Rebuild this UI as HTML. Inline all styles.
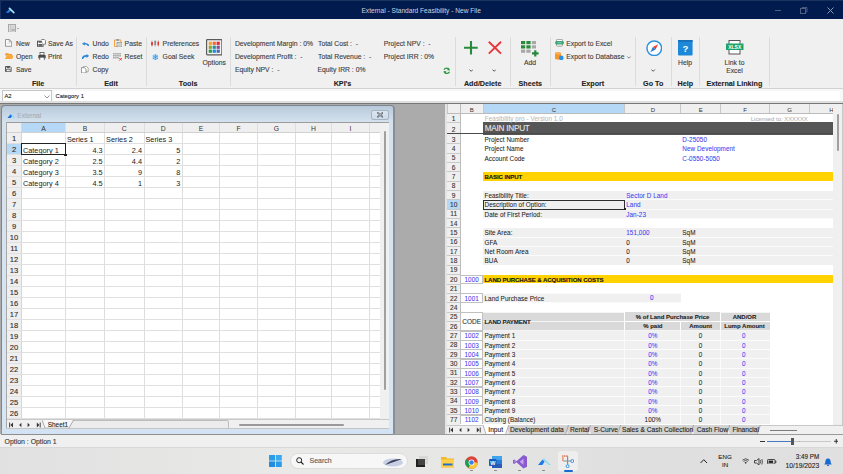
<!DOCTYPE html><html><head><meta charset="utf-8"><style>
html,body{margin:0;padding:0;}
body{width:843px;height:474px;overflow:hidden;position:relative;background:#f0f0f0;font-family:"Liberation Sans",sans-serif;}
div,svg{position:absolute;box-sizing:border-box;}
div{-webkit-text-stroke:0.1px currentColor;}
</style></head><body>
<div style="left:0.00px;top:0.00px;width:843.00px;height:19.40px;background:#011b4f;"></div>
<div style="left:0.00px;top:0.00px;width:843.00px;height:1.00px;background:#1b325f;"></div>
<svg style="left:5.00px;top:6.50px;" width="10" height="7" viewBox="0 0 10 7"><path d="M0.8 5.8 L4.3 2.2 L5.9 3.8 L3.6 5.8 Z" fill="#2a86ec"/><path d="M4.5 1.4 L8.8 5.6" stroke="#a8e4f4" stroke-width="1.7" stroke-linecap="round"/></svg>
<div style="left:0.00px;top:0.00px;width:1.00px;height:19.40px;background:#1a3060;"></div>
<div style="left:271.20px;top:5.80px;width:300px;text-align:center;line-height:10px;font-size:6.6px;color:#cdd4e2;font-weight:normal;white-space:nowrap;-webkit-text-stroke:0;">External - Standard Feasibility - New File</div>
<div style="left:774.80px;top:9.60px;width:6.00px;height:0.90px;background:#4e5f80;"></div>
<svg style="left:800.00px;top:7.00px;" width="8" height="7" viewBox="0 0 8 7"><rect x="0.5" y="1.5" width="5" height="5" stroke="#4e5f80" fill="none" stroke-width="1"/><path d="M2 1.5 V0.5 H7 V5 H6" stroke="#4e5f80" fill="none" stroke-width="0.9"/></svg>
<svg style="left:827.00px;top:7.00px;" width="7" height="7" viewBox="0 0 7 7"><path d="M0.5 0.5 L6.5 6.5 M6.5 0.5 L0.5 6.5" stroke="#8e9ab2" stroke-width="1"/></svg>
<div style="left:0.00px;top:19.40px;width:843.00px;height:68.60px;background:#f0f0f0;"></div>
<svg style="left:8.40px;top:23.60px;" width="11.5" height="8.6" viewBox="0 0 11.5 8.6"><rect x="0.5" y="0.5" width="7" height="7.8" fill="#dcdcdc" stroke="#a4a4a4" stroke-width="0.9"/><path d="M2.6 0.5 V8.3" stroke="#b8b8b8" stroke-width="0.6"/><path d="M3.6 2.4 H6.6 M3.6 4.2 H6.6" stroke="#c4c4c4" stroke-width="0.6"/><path d="M3.4 6 H6.8" stroke="#888" stroke-width="0.9"/><path d="M8.8 4 L9.9 5 L11 4" stroke="#999" fill="none" stroke-width="0.8"/></svg>
<div style="left:76.00px;top:37.00px;width:1.00px;height:49.00px;background:#dcdcdc;"></div>
<div style="left:146.00px;top:37.00px;width:1.00px;height:49.00px;background:#dcdcdc;"></div>
<div style="left:229.50px;top:37.00px;width:1.00px;height:49.00px;background:#dcdcdc;"></div>
<div style="left:455.20px;top:37.00px;width:1.00px;height:49.00px;background:#dcdcdc;"></div>
<div style="left:510.10px;top:37.00px;width:1.00px;height:49.00px;background:#dcdcdc;"></div>
<div style="left:549.90px;top:37.00px;width:1.00px;height:49.00px;background:#dcdcdc;"></div>
<div style="left:635.00px;top:37.00px;width:1.00px;height:49.00px;background:#dcdcdc;"></div>
<div style="left:671.00px;top:37.00px;width:1.00px;height:49.00px;background:#dcdcdc;"></div>
<div style="left:699.00px;top:37.00px;width:1.00px;height:49.00px;background:#dcdcdc;"></div>
<div style="left:769.20px;top:37.00px;width:1.00px;height:49.00px;background:#dcdcdc;"></div>
<div style="left:16.00px;top:38.70px;line-height:10px;font-size:6.8px;color:#3a3a3a;font-weight:normal;white-space:nowrap;">New</div>
<div style="left:16.00px;top:52.00px;line-height:10px;font-size:6.8px;color:#3a3a3a;font-weight:normal;white-space:nowrap;">Open</div>
<div style="left:16.00px;top:65.00px;line-height:10px;font-size:6.8px;color:#3a3a3a;font-weight:normal;white-space:nowrap;">Save</div>
<div style="left:48.00px;top:38.70px;line-height:10px;font-size:6.8px;color:#3a3a3a;font-weight:normal;white-space:nowrap;">Save As</div>
<div style="left:48.00px;top:52.00px;line-height:10px;font-size:6.8px;color:#3a3a3a;font-weight:normal;white-space:nowrap;">Print</div>
<div style="left:8.20px;top:78.50px;width:60px;text-align:center;line-height:10px;font-size:7.2px;color:#222;font-weight:bold;white-space:nowrap;">File</div>
<div style="left:92.60px;top:38.70px;line-height:10px;font-size:6.8px;color:#3a3a3a;font-weight:normal;white-space:nowrap;">Undo</div>
<div style="left:92.60px;top:51.50px;line-height:10px;font-size:6.8px;color:#3a3a3a;font-weight:normal;white-space:nowrap;">Redo</div>
<div style="left:92.60px;top:65.00px;line-height:10px;font-size:6.8px;color:#3a3a3a;font-weight:normal;white-space:nowrap;">Copy</div>
<div style="left:124.60px;top:38.70px;line-height:10px;font-size:6.8px;color:#3a3a3a;font-weight:normal;white-space:nowrap;">Paste</div>
<div style="left:124.60px;top:51.50px;line-height:10px;font-size:6.8px;color:#3a3a3a;font-weight:normal;white-space:nowrap;">Reset</div>
<div style="left:81.00px;top:78.50px;width:60px;text-align:center;line-height:10px;font-size:7.2px;color:#222;font-weight:bold;white-space:nowrap;">Edit</div>
<div style="left:162.60px;top:38.70px;line-height:10px;font-size:6.8px;color:#3a3a3a;font-weight:normal;white-space:nowrap;">Preferences</div>
<div style="left:162.60px;top:52.00px;line-height:10px;font-size:6.8px;color:#3a3a3a;font-weight:normal;white-space:nowrap;">Goal Seek</div>
<div style="left:194.20px;top:58.00px;width:40px;text-align:center;line-height:10px;font-size:6.8px;color:#3a3a3a;font-weight:normal;white-space:nowrap;">Options</div>
<div style="left:158.20px;top:78.50px;width:60px;text-align:center;line-height:10px;font-size:7.2px;color:#222;font-weight:bold;white-space:nowrap;">Tools</div>
<div style="left:234.90px;top:38.70px;line-height:10px;font-size:6.8px;color:#3a3a3a;font-weight:normal;white-space:nowrap;">Development Margin : 0%</div>
<div style="left:234.90px;top:52.00px;line-height:10px;font-size:6.8px;color:#3a3a3a;font-weight:normal;white-space:nowrap;">Development Profit :&nbsp; -</div>
<div style="left:234.90px;top:65.00px;line-height:10px;font-size:6.8px;color:#3a3a3a;font-weight:normal;white-space:nowrap;">Equity NPV :&nbsp; -</div>
<div style="left:318.00px;top:38.70px;line-height:10px;font-size:6.8px;color:#3a3a3a;font-weight:normal;white-space:nowrap;">Total Cost :&nbsp; -</div>
<div style="left:318.00px;top:52.00px;line-height:10px;font-size:6.8px;color:#3a3a3a;font-weight:normal;white-space:nowrap;">Total Revenue :&nbsp; -</div>
<div style="left:317.50px;top:65.00px;line-height:10px;font-size:6.8px;color:#3a3a3a;font-weight:normal;white-space:nowrap;">Equity IRR : 0%</div>
<div style="left:383.80px;top:38.70px;line-height:10px;font-size:6.8px;color:#3a3a3a;font-weight:normal;white-space:nowrap;">Project NPV :&nbsp; -</div>
<div style="left:383.80px;top:52.00px;line-height:10px;font-size:6.8px;color:#3a3a3a;font-weight:normal;white-space:nowrap;">Project IRR : 0%</div>
<div style="left:312.50px;top:78.50px;width:60px;text-align:center;line-height:10px;font-size:7.2px;color:#222;font-weight:bold;white-space:nowrap;">KPI's</div>
<div style="left:442.70px;top:78.50px;width:80px;text-align:center;line-height:10px;font-size:7.2px;color:#222;font-weight:bold;white-space:nowrap;">Add/Delete</div>
<div style="left:500.30px;top:78.50px;width:60px;text-align:center;line-height:10px;font-size:7.2px;color:#222;font-weight:bold;white-space:nowrap;">Sheets</div>
<div style="left:510.00px;top:58.00px;width:40px;text-align:center;line-height:10px;font-size:6.8px;color:#3a3a3a;font-weight:normal;white-space:nowrap;">Add</div>
<div style="left:566.30px;top:38.70px;line-height:10px;font-size:6.8px;color:#3a3a3a;font-weight:normal;white-space:nowrap;">Export to Excel</div>
<div style="left:566.30px;top:52.00px;line-height:10px;font-size:6.8px;color:#3a3a3a;font-weight:normal;white-space:nowrap;">Export to Database</div>
<div style="left:562.90px;top:78.50px;width:60px;text-align:center;line-height:10px;font-size:7.2px;color:#222;font-weight:bold;white-space:nowrap;">Export</div>
<div style="left:623.20px;top:78.50px;width:60px;text-align:center;line-height:10px;font-size:7.2px;color:#222;font-weight:bold;white-space:nowrap;">Go To</div>
<div style="left:665.00px;top:58.00px;width:40px;text-align:center;line-height:10px;font-size:6.8px;color:#3a3a3a;font-weight:normal;white-space:nowrap;">Help</div>
<div style="left:655.30px;top:78.50px;width:60px;text-align:center;line-height:10px;font-size:7.2px;color:#222;font-weight:bold;white-space:nowrap;">Help</div>
<div style="left:714.50px;top:58.00px;width:40px;text-align:center;line-height:10px;font-size:6.8px;color:#3a3a3a;font-weight:normal;white-space:nowrap;">Link to</div>
<div style="left:714.50px;top:65.60px;width:40px;text-align:center;line-height:10px;font-size:6.8px;color:#3a3a3a;font-weight:normal;white-space:nowrap;">Excel</div>
<div style="left:684.40px;top:78.50px;width:100px;text-align:center;line-height:10px;font-size:7.2px;color:#222;font-weight:bold;white-space:nowrap;">External Linking</div>
<svg style="left:5.00px;top:39.40px;" width="7.2" height="7.8" viewBox="0 0 7.2 7.8"><path d="M0.5 0.5 H4.3 L6.7 2.9 V7.3 H0.5 Z" fill="#fafafa" stroke="#8c8c8c" stroke-width="0.9"/><path d="M4.3 0.5 V2.9 H6.7" fill="none" stroke="#8c8c8c" stroke-width="0.7"/><path d="M2 4.3 H5" stroke="#c8c8c8" stroke-width="0.6"/></svg>
<svg style="left:4.60px;top:53.10px;" width="8.8" height="6.2" viewBox="0 0 8.8 6.2"><path d="M0.3 0.3 H3.2 L4 1.1 H7 V2.4 H0.3 Z" fill="#f39a2a"/><path d="M0.3 2.2 V5.9 H7 L8.6 2.6 H2 L0.3 5.2" fill="#f7a035"/><path d="M1.8 2.6 H8.6 L7 5.9 H0.3 Z" fill="#fba93d"/></svg>
<svg style="left:5.40px;top:66.20px;" width="6.6" height="6.2" viewBox="0 0 6.6 6.2"><path d="M0.5 0.5 H5.2 L6.1 1.4 V5.7 H0.5 Z" fill="#fff" stroke="#575757" stroke-width="1"/><rect x="1.6" y="0.5" width="3.2" height="1.9" fill="#575757"/><rect x="1.5" y="3.5" width="3.6" height="2.2" fill="#e8e8e8" stroke="#575757" stroke-width="0.6"/></svg>
<svg style="left:37.20px;top:38.80px;" width="9" height="7.8" viewBox="0 0 9 7.8"><rect x="0.5" y="2.2" width="5.6" height="5.1" fill="#fff" stroke="#555" stroke-width="1"/><rect x="1.6" y="2.2" width="3.2" height="1.6" fill="#555"/><rect x="1.4" y="5" width="3.8" height="1.8" fill="#555"/><path d="M4.3 0.5 H7.3 L8.5 1.7 V5.2 H6.3" fill="#fff" stroke="#666" stroke-width="0.8"/></svg>
<svg style="left:37.60px;top:51.60px;" width="8" height="8.8" viewBox="0 0 8 8.8"><rect x="2" y="0.4" width="4" height="2.6" fill="#fff" stroke="#555" stroke-width="0.8"/><rect x="0.3" y="3" width="7.4" height="3.6" rx="0.8" fill="#4a4a4a"/><rect x="1.8" y="5.2" width="4.4" height="3.2" fill="#fff" stroke="#555" stroke-width="0.8"/></svg>
<svg style="left:82.20px;top:41.60px;" width="7.2" height="4.8" viewBox="0 0 7.2 4.8"><path d="M0 1.8 L2.8 0 V3.6 Z" fill="#2a86d6"/><path d="M2.4 1.8 C4.8 1.6 6.4 2.3 6.9 4.6" stroke="#2a86d6" stroke-width="1.7" fill="none"/></svg>
<svg style="left:82.00px;top:53.50px;" width="7.2" height="5.2" viewBox="0 0 7.2 5.2"><path d="M7.2 2 L4.4 0.1 V3.9 Z" fill="#2a86d6"/><path d="M4.8 2 C2.4 1.8 0.8 2.8 0.3 5" stroke="#2a86d6" stroke-width="1.7" fill="none"/></svg>
<svg style="left:81.30px;top:65.80px;" width="7.6" height="7.4" viewBox="0 0 7.6 7.4"><path d="M2.6 0.4 H5.4 L7.2 2.2 V5.8 H2.6 Z" fill="#fff" stroke="#8a8a8a" stroke-width="0.7"/><path d="M0.4 1.6 H3.4 L5 3.2 V7 H0.4 Z" fill="#fff" stroke="#7a7a7a" stroke-width="0.8"/></svg>
<svg style="left:114.00px;top:38.80px;" width="8.4" height="8.2" viewBox="0 0 8.4 8.2"><path d="M2 1 H0.5 V7.6 H3" fill="none" stroke="#f39a2a" stroke-width="0.9"/><path d="M5.5 1 H6.8 V3" fill="none" stroke="#f39a2a" stroke-width="0.9"/><rect x="2.2" y="0.2" width="3" height="1.6" fill="#8a8a8a"/><rect x="3" y="3.4" width="5" height="4.6" fill="#e0e0e0" stroke="#8a8a8a" stroke-width="0.7"/><path d="M4 5 H7 M4 6.4 H7" stroke="#aaa" stroke-width="0.5"/></svg>
<svg style="left:113.00px;top:53.20px;" width="9.2" height="7.8" viewBox="0 0 9.2 7.8"><g fill="#a4a4a4"><rect x="0" y="0" width="1.6" height="1.5"/><rect x="2.1" y="0" width="1.6" height="1.5"/><rect x="4.2" y="0" width="1.6" height="1.5"/><rect x="6.3" y="0" width="1.6" height="1.5"/><rect x="0" y="2" width="1.6" height="1.5"/><rect x="2.1" y="2" width="1.6" height="1.5"/><rect x="4.2" y="2" width="1.6" height="1.5"/><rect x="6.3" y="2" width="1.6" height="1.5"/><rect x="0" y="4" width="1.6" height="1.5"/><rect x="2.1" y="4" width="1.6" height="1.5"/><rect x="4.2" y="4" width="1.6" height="1.5"/></g><path d="M6.3 5 L8.8 7.5 M8.8 5 L6.3 7.5" stroke="#e83030" stroke-width="1"/></svg>
<svg style="left:150.80px;top:40.20px;" width="8.4" height="6.8" viewBox="0 0 8.4 6.8"><path d="M1 0 V6.8 M4.2 0 V6.8 M7.4 0 V6.8" stroke="#b8b8b8" stroke-width="0.7"/><rect x="0.1" y="1.8" width="1.8" height="3.6" rx="0.5" fill="#e5322d"/><rect x="3.3" y="0.8" width="1.8" height="4.4" rx="0.5" fill="#8a8a8a"/><rect x="6.5" y="1.4" width="1.8" height="4" rx="0.5" fill="#e5322d"/></svg>
<svg style="left:151.80px;top:53.50px;" width="6.8" height="6.4" viewBox="0 0 6.8 6.4"><circle cx="3.4" cy="3.2" r="2.9" fill="#9fd0f2"/><circle cx="3.4" cy="3.2" r="1.2" fill="#fff"/><path d="M3.4 0.2 V6.2 M0.8 1.7 L6 4.7 M0.8 4.7 L6 1.7" stroke="#3a98de" stroke-width="0.8"/></svg>
<svg style="left:205.50px;top:39.00px;" width="16.5" height="16.5" viewBox="0 0 16.5 16.5"><rect x="0.6" y="0.6" width="15.3" height="15.3" fill="#f4f4f4" stroke="#5a5a5a" stroke-width="1.2" rx="0.8"/><rect x="2.7" y="2.7" width="3.2" height="3.2" fill="#f5a030"/><rect x="6.65" y="2.7" width="3.2" height="3.2" fill="#f06a2a"/><rect x="10.6" y="2.7" width="3.2" height="3.2" fill="#e8283a"/><rect x="2.7" y="6.65" width="3.2" height="3.2" fill="#9aa030"/><rect x="6.65" y="6.65" width="3.2" height="3.2" fill="#1a9a8a"/><rect x="10.6" y="6.65" width="3.2" height="3.2" fill="#8a4aa0"/><rect x="2.7" y="10.6" width="3.2" height="3.2" fill="#2a9a3a"/><rect x="6.65" y="10.6" width="3.2" height="3.2" fill="#1a88e0"/><rect x="10.6" y="10.6" width="3.2" height="3.2" fill="#4a6ab0"/></svg>
<svg style="left:442.50px;top:66.50px;" width="7.5" height="7.5" viewBox="0 0 7.5 7.5"><path d="M6.3 2.6 A3 3 0 0 0 1 2.8" stroke="#2e9a3e" stroke-width="1.3" fill="none"/><path d="M1.2 4.9 A3 3 0 0 0 6.5 4.7" stroke="#2e9a3e" stroke-width="1.3" fill="none"/><path d="M5 0.6 L7.2 3.4 L4.2 3.2 Z" fill="#2e9a3e"/><path d="M2.5 6.9 L0.3 4.1 L3.3 4.3 Z" fill="#2e9a3e"/></svg>
<svg style="left:464.40px;top:41.00px;" width="14" height="14" viewBox="0 0 14 14"><path d="M7 0 V13.5 M0 6.8 H13.7" stroke="#2a8a3c" stroke-width="2.1"/></svg>
<svg style="left:487.70px;top:41.20px;" width="14" height="13.5" viewBox="0 0 14 13.5"><path d="M0.8 0.8 L13 12.6 M13 0.8 L0.8 12.6" stroke="#e8363a" stroke-width="1.9"/></svg>
<svg style="left:469.10px;top:68.60px;" width="4.4" height="3" viewBox="0 0 4.4 3"><path d="M0.5 0.6 L2.2 2.3 L3.9 0.6" stroke="#555" stroke-width="1" fill="none"/></svg>
<svg style="left:492.00px;top:68.60px;" width="4.4" height="3" viewBox="0 0 4.4 3"><path d="M0.5 0.6 L2.2 2.3 L3.9 0.6" stroke="#555" stroke-width="1" fill="none"/></svg>
<svg style="left:651.30px;top:68.60px;" width="4.4" height="3" viewBox="0 0 4.4 3"><path d="M0.5 0.6 L2.2 2.3 L3.9 0.6" stroke="#555" stroke-width="1" fill="none"/></svg>
<svg style="left:521.20px;top:40.90px;" width="18.5" height="16" viewBox="0 0 18.5 16"><g fill="#2a8a3c"><rect x="0" y="0" width="4.2" height="3.2"/><rect x="5.4" y="0" width="4.2" height="3.2"/><rect x="0" y="4.3" width="4.2" height="3.2"/><rect x="5.4" y="4.3" width="4.2" height="3.2"/></g><g fill="#a8a8a8"><rect x="10.8" y="0" width="4.2" height="3.2"/><rect x="10.8" y="4.3" width="4.2" height="3.2"/><rect x="0" y="8.6" width="4.2" height="3.2"/><rect x="5.4" y="8.6" width="4.2" height="3.2"/></g><path d="M14.3 9.2 V15.6 M11 12.4 H17.6" stroke="#2a8a3c" stroke-width="2.2"/></svg>
<svg style="left:555.10px;top:39.30px;" width="9" height="7.5" viewBox="0 0 9 7.5"><rect x="1.5" y="0.4" width="6" height="6.7" rx="0.8" fill="#fff" stroke="#8a8a8a" stroke-width="0.8"/><rect x="0" y="2" width="9" height="3.4" rx="1.7" fill="#3ba57a"/><path d="M2.5 3.7 H6.5" stroke="#bfe6d2" stroke-width="0.6"/></svg>
<svg style="left:555.00px;top:52.00px;" width="8.6" height="8.2" viewBox="0 0 8.6 8.2"><path d="M0 1.2 C0 -0.2 6 -0.2 6 1.2 V6.6 C6 8 0 8 0 6.6 Z" fill="#f7962a"/><ellipse cx="3" cy="1.3" rx="3" ry="1.1" fill="#fbb060"/><circle cx="6.3" cy="5.9" r="2.3" fill="#2a90e0"/></svg>
<svg style="left:627.00px;top:55.50px;" width="4" height="3" viewBox="0 0 4 3"><path d="M0.3 0.5 L2 2.2 L3.7 0.5" stroke="#666" stroke-width="0.8" fill="none"/></svg>
<svg style="left:645.70px;top:39.50px;" width="16.5" height="16.5" viewBox="0 0 16.5 16.5"><circle cx="8.25" cy="8.25" r="7.3" fill="#fff" stroke="#2a92de" stroke-width="1.5"/><path d="M12.2 4.3 L6.9 6.9 L9.6 9.6 Z" fill="#e8403a"/><path d="M4.3 12.2 L6.9 6.9 L9.6 9.6 Z" fill="#2a7ad0"/></svg>
<svg style="left:677.70px;top:39.70px;" width="15" height="16" viewBox="0 0 15 16"><rect x="0" y="0" width="14.6" height="15.6" rx="1" fill="#1e88d8"/><rect x="0" y="0" width="14.6" height="1.8" fill="#1670b8"/><text x="7.3" y="11.8" font-size="9.5" font-family="Liberation Sans" font-weight="bold" fill="#fff" text-anchor="middle">?</text></svg>
<svg style="left:726.00px;top:39.60px;" width="17.5" height="15" viewBox="0 0 17.5 15"><rect x="3" y="0.5" width="11" height="13.5" fill="#fff" stroke="#555" stroke-width="1"/><rect x="0" y="3.5" width="17.5" height="6.5" fill="#21a366"/><text x="8.75" y="8.9" font-size="5" font-family="Liberation Sans" font-weight="bold" fill="#fff" text-anchor="middle">XLSX</text></svg>
<div style="left:0.00px;top:87.80px;width:843.00px;height:1.40px;background:#d2d2d2;"></div>
<div style="left:0.00px;top:88.80px;width:843.00px;height:14.50px;background:#f8f8f8;"></div>
<div style="left:2.20px;top:90.20px;width:49.50px;height:11.50px;background:#fff;border:1px solid #c6c6c6;"></div>
<div style="left:4.50px;top:91.00px;line-height:10px;font-size:5.8px;color:#222;font-weight:normal;white-space:nowrap;">A2</div>
<svg style="left:44.00px;top:94.50px;" width="6" height="4" viewBox="0 0 6 4"><path d="M0.5 0.5 L3 3 L5.5 0.5" stroke="#777" fill="none" stroke-width="0.8"/></svg>
<div style="left:53.80px;top:91.30px;width:786.60px;height:9.60px;background:#fff;"></div>
<div style="left:55.50px;top:91.00px;line-height:10px;font-size:5.8px;color:#222;font-weight:normal;white-space:nowrap;">Category 1</div>
<div style="left:0.00px;top:100.90px;width:843.00px;height:2.40px;background:#dedede;"></div>
<div style="left:0.00px;top:103.30px;width:843.00px;height:331.00px;background:#ababab;border-top:1.4px solid #777;"></div>
<div style="left:0.80px;top:104.50px;width:394.20px;height:330.10px;background:linear-gradient(180deg,#b8c9da 0px,#d4e2ee 16px,#d8e5f3 100%);border:1px solid #7c8690;border-right:2px solid #8a8e94;border-radius:4px 4px 0 0;"></div>
<svg style="left:6.80px;top:112.50px;" width="8.5" height="5.5" viewBox="0 0 8.5 5.5"><path d="M0 5.5 L3.6 1.2 L5.2 2.8 L3.4 5.5 Z" fill="#1f6fe0"/><path d="M3.6 1.2 L4.4 0.4 L8.5 5.5 H6.8 Z" fill="#8ad8f2"/></svg>
<div style="left:17.30px;top:110.80px;line-height:10px;font-size:6.5px;color:#a4adb8;font-weight:normal;white-space:nowrap;">External</div>
<div style="left:371.00px;top:110.10px;width:17.50px;height:9.70px;background:linear-gradient(#dce6f0,#cddbe8);border:1px solid #a6b4c2;border-radius:2px;"></div>
<svg style="left:376.60px;top:112.20px;" width="6.4" height="5.6" viewBox="0 0 6.4 5.6"><path d="M0.9 0.9 L5.5 4.7 M5.5 0.9 L0.9 4.7" stroke="#6a727c" stroke-width="1.8" stroke-linecap="round"/><path d="M1.2 1.1 L5.2 4.5 M5.2 1.1 L1.2 4.5" stroke="#d8dde2" stroke-width="0.5"/></svg>
<div style="left:5.50px;top:122.00px;width:383.50px;height:306.50px;background:#f0f0f0;border-left:1px solid #a8a8a8;border-top:1px solid #9c9c9c;"></div>
<div style="left:21.50px;top:132.50px;width:358.70px;height:286.00px;background:#fff;"></div>
<div style="left:6.50px;top:122.50px;width:373.70px;height:10.00px;background:#efefef;"></div>
<div style="left:21.50px;top:122.50px;width:43.90px;height:10.00px;background:#b4d8f6;"></div>
<div style="left:23.45px;top:123.90px;width:40px;text-align:center;line-height:10px;font-size:6.8px;color:#333;font-weight:normal;white-space:nowrap;-webkit-text-stroke:0;">A</div>
<div style="left:65.00px;top:123.90px;width:40px;text-align:center;line-height:10px;font-size:6.8px;color:#333;font-weight:normal;white-space:nowrap;-webkit-text-stroke:0;">B</div>
<div style="left:104.30px;top:123.90px;width:40px;text-align:center;line-height:10px;font-size:6.8px;color:#333;font-weight:normal;white-space:nowrap;-webkit-text-stroke:0;">C</div>
<div style="left:143.20px;top:123.90px;width:40px;text-align:center;line-height:10px;font-size:6.8px;color:#333;font-weight:normal;white-space:nowrap;-webkit-text-stroke:0;">D</div>
<div style="left:181.05px;top:123.90px;width:40px;text-align:center;line-height:10px;font-size:6.8px;color:#333;font-weight:normal;white-space:nowrap;-webkit-text-stroke:0;">E</div>
<div style="left:218.65px;top:123.90px;width:40px;text-align:center;line-height:10px;font-size:6.8px;color:#333;font-weight:normal;white-space:nowrap;-webkit-text-stroke:0;">F</div>
<div style="left:256.30px;top:123.90px;width:40px;text-align:center;line-height:10px;font-size:6.8px;color:#333;font-weight:normal;white-space:nowrap;-webkit-text-stroke:0;">G</div>
<div style="left:293.40px;top:123.90px;width:40px;text-align:center;line-height:10px;font-size:6.8px;color:#333;font-weight:normal;white-space:nowrap;-webkit-text-stroke:0;">H</div>
<div style="left:330.50px;top:123.90px;width:40px;text-align:center;line-height:10px;font-size:6.8px;color:#333;font-weight:normal;white-space:nowrap;-webkit-text-stroke:0;">I</div>
<div style="left:6.50px;top:132.50px;width:15.00px;height:286.00px;background:#efefef;"></div>
<div style="left:6.50px;top:143.50px;width:15.00px;height:11.00px;background:#b4d8f6;"></div>
<div style="left:64.90px;top:122.50px;width:1.00px;height:296.00px;background:#dedede;"></div>
<div style="left:104.10px;top:122.50px;width:1.00px;height:296.00px;background:#dedede;"></div>
<div style="left:143.50px;top:122.50px;width:1.00px;height:296.00px;background:#dedede;"></div>
<div style="left:181.90px;top:122.50px;width:1.00px;height:296.00px;background:#dedede;"></div>
<div style="left:219.20px;top:122.50px;width:1.00px;height:296.00px;background:#dedede;"></div>
<div style="left:257.10px;top:122.50px;width:1.00px;height:296.00px;background:#dedede;"></div>
<div style="left:294.50px;top:122.50px;width:1.00px;height:296.00px;background:#dedede;"></div>
<div style="left:331.30px;top:122.50px;width:1.00px;height:296.00px;background:#dedede;"></div>
<div style="left:368.70px;top:122.50px;width:1.00px;height:296.00px;background:#dedede;"></div>
<div style="left:379.70px;top:122.50px;width:1.00px;height:296.00px;background:#dedede;"></div>
<div style="left:21.00px;top:122.50px;width:1.00px;height:296.00px;background:#d6d6d6;"></div>
<div style="left:6.50px;top:132.00px;width:373.70px;height:1.00px;background:#e0e0e0;"></div>
<div style="left:6.50px;top:143.00px;width:373.70px;height:1.00px;background:#e0e0e0;"></div>
<div style="left:6.50px;top:154.00px;width:373.70px;height:1.00px;background:#e0e0e0;"></div>
<div style="left:6.50px;top:165.00px;width:373.70px;height:1.00px;background:#e0e0e0;"></div>
<div style="left:6.50px;top:176.00px;width:373.70px;height:1.00px;background:#e0e0e0;"></div>
<div style="left:6.50px;top:187.00px;width:373.70px;height:1.00px;background:#e0e0e0;"></div>
<div style="left:6.50px;top:198.00px;width:373.70px;height:1.00px;background:#e0e0e0;"></div>
<div style="left:6.50px;top:209.00px;width:373.70px;height:1.00px;background:#e0e0e0;"></div>
<div style="left:6.50px;top:220.00px;width:373.70px;height:1.00px;background:#e0e0e0;"></div>
<div style="left:6.50px;top:231.00px;width:373.70px;height:1.00px;background:#e0e0e0;"></div>
<div style="left:6.50px;top:242.00px;width:373.70px;height:1.00px;background:#e0e0e0;"></div>
<div style="left:6.50px;top:253.00px;width:373.70px;height:1.00px;background:#e0e0e0;"></div>
<div style="left:6.50px;top:264.00px;width:373.70px;height:1.00px;background:#e0e0e0;"></div>
<div style="left:6.50px;top:275.00px;width:373.70px;height:1.00px;background:#e0e0e0;"></div>
<div style="left:6.50px;top:286.00px;width:373.70px;height:1.00px;background:#e0e0e0;"></div>
<div style="left:6.50px;top:297.00px;width:373.70px;height:1.00px;background:#e0e0e0;"></div>
<div style="left:6.50px;top:308.00px;width:373.70px;height:1.00px;background:#e0e0e0;"></div>
<div style="left:6.50px;top:319.00px;width:373.70px;height:1.00px;background:#e0e0e0;"></div>
<div style="left:6.50px;top:330.00px;width:373.70px;height:1.00px;background:#e0e0e0;"></div>
<div style="left:6.50px;top:341.00px;width:373.70px;height:1.00px;background:#e0e0e0;"></div>
<div style="left:6.50px;top:352.00px;width:373.70px;height:1.00px;background:#e0e0e0;"></div>
<div style="left:6.50px;top:363.00px;width:373.70px;height:1.00px;background:#e0e0e0;"></div>
<div style="left:6.50px;top:374.00px;width:373.70px;height:1.00px;background:#e0e0e0;"></div>
<div style="left:6.50px;top:385.00px;width:373.70px;height:1.00px;background:#e0e0e0;"></div>
<div style="left:6.50px;top:396.00px;width:373.70px;height:1.00px;background:#e0e0e0;"></div>
<div style="left:6.50px;top:407.00px;width:373.70px;height:1.00px;background:#e0e0e0;"></div>
<div style="left:6.50px;top:418.00px;width:373.70px;height:1.00px;background:#e0e0e0;"></div>
<div style="left:6.50px;top:131.80px;width:373.70px;height:1.50px;background:#d2d2d2;"></div>
<div style="left:4.10px;top:134.10px;width:20px;text-align:center;line-height:10px;font-size:7.6px;color:#2a2a2a;font-weight:normal;white-space:nowrap;">1</div>
<div style="left:4.10px;top:145.10px;width:20px;text-align:center;line-height:10px;font-size:7.6px;color:#2a2a2a;font-weight:normal;white-space:nowrap;">2</div>
<div style="left:4.10px;top:156.10px;width:20px;text-align:center;line-height:10px;font-size:7.6px;color:#2a2a2a;font-weight:normal;white-space:nowrap;">3</div>
<div style="left:4.10px;top:167.10px;width:20px;text-align:center;line-height:10px;font-size:7.6px;color:#2a2a2a;font-weight:normal;white-space:nowrap;">4</div>
<div style="left:4.10px;top:178.10px;width:20px;text-align:center;line-height:10px;font-size:7.6px;color:#2a2a2a;font-weight:normal;white-space:nowrap;">5</div>
<div style="left:4.10px;top:189.10px;width:20px;text-align:center;line-height:10px;font-size:7.6px;color:#2a2a2a;font-weight:normal;white-space:nowrap;">6</div>
<div style="left:4.10px;top:200.10px;width:20px;text-align:center;line-height:10px;font-size:7.6px;color:#2a2a2a;font-weight:normal;white-space:nowrap;">7</div>
<div style="left:4.10px;top:211.10px;width:20px;text-align:center;line-height:10px;font-size:7.6px;color:#2a2a2a;font-weight:normal;white-space:nowrap;">8</div>
<div style="left:4.10px;top:222.10px;width:20px;text-align:center;line-height:10px;font-size:7.6px;color:#2a2a2a;font-weight:normal;white-space:nowrap;">9</div>
<div style="left:4.10px;top:233.10px;width:20px;text-align:center;line-height:10px;font-size:7.6px;color:#2a2a2a;font-weight:normal;white-space:nowrap;">10</div>
<div style="left:4.10px;top:244.10px;width:20px;text-align:center;line-height:10px;font-size:7.6px;color:#2a2a2a;font-weight:normal;white-space:nowrap;">11</div>
<div style="left:4.10px;top:255.10px;width:20px;text-align:center;line-height:10px;font-size:7.6px;color:#2a2a2a;font-weight:normal;white-space:nowrap;">12</div>
<div style="left:4.10px;top:266.10px;width:20px;text-align:center;line-height:10px;font-size:7.6px;color:#2a2a2a;font-weight:normal;white-space:nowrap;">13</div>
<div style="left:4.10px;top:277.10px;width:20px;text-align:center;line-height:10px;font-size:7.6px;color:#2a2a2a;font-weight:normal;white-space:nowrap;">14</div>
<div style="left:4.10px;top:288.10px;width:20px;text-align:center;line-height:10px;font-size:7.6px;color:#2a2a2a;font-weight:normal;white-space:nowrap;">15</div>
<div style="left:4.10px;top:299.10px;width:20px;text-align:center;line-height:10px;font-size:7.6px;color:#2a2a2a;font-weight:normal;white-space:nowrap;">16</div>
<div style="left:4.10px;top:310.10px;width:20px;text-align:center;line-height:10px;font-size:7.6px;color:#2a2a2a;font-weight:normal;white-space:nowrap;">17</div>
<div style="left:4.10px;top:321.10px;width:20px;text-align:center;line-height:10px;font-size:7.6px;color:#2a2a2a;font-weight:normal;white-space:nowrap;">18</div>
<div style="left:4.10px;top:332.10px;width:20px;text-align:center;line-height:10px;font-size:7.6px;color:#2a2a2a;font-weight:normal;white-space:nowrap;">19</div>
<div style="left:4.10px;top:343.10px;width:20px;text-align:center;line-height:10px;font-size:7.6px;color:#2a2a2a;font-weight:normal;white-space:nowrap;">20</div>
<div style="left:4.10px;top:354.10px;width:20px;text-align:center;line-height:10px;font-size:7.6px;color:#2a2a2a;font-weight:normal;white-space:nowrap;">21</div>
<div style="left:4.10px;top:365.10px;width:20px;text-align:center;line-height:10px;font-size:7.6px;color:#2a2a2a;font-weight:normal;white-space:nowrap;">22</div>
<div style="left:4.10px;top:376.10px;width:20px;text-align:center;line-height:10px;font-size:7.6px;color:#2a2a2a;font-weight:normal;white-space:nowrap;">23</div>
<div style="left:4.10px;top:387.10px;width:20px;text-align:center;line-height:10px;font-size:7.6px;color:#2a2a2a;font-weight:normal;white-space:nowrap;">24</div>
<div style="left:4.10px;top:398.10px;width:20px;text-align:center;line-height:10px;font-size:7.6px;color:#2a2a2a;font-weight:normal;white-space:nowrap;">25</div>
<div style="left:4.10px;top:409.10px;width:20px;text-align:center;line-height:10px;font-size:7.6px;color:#2a2a2a;font-weight:normal;white-space:nowrap;">26</div>
<div style="left:66.90px;top:134.70px;line-height:10px;font-size:7.3px;color:#222;font-weight:normal;white-space:nowrap;-webkit-text-stroke:0;">Series 1</div>
<div style="left:106.10px;top:134.70px;line-height:10px;font-size:7.3px;color:#222;font-weight:normal;white-space:nowrap;-webkit-text-stroke:0;">Series 2</div>
<div style="left:145.50px;top:134.70px;line-height:10px;font-size:7.3px;color:#222;font-weight:normal;white-space:nowrap;-webkit-text-stroke:0;">Series 3</div>
<div style="left:23.00px;top:145.70px;line-height:10px;font-size:7.3px;color:#222;font-weight:normal;white-space:nowrap;-webkit-text-stroke:0;">Category 1</div>
<div style="left:62.60px;top:145.70px;width:40px;text-align:right;line-height:10px;font-size:7.3px;color:#222;font-weight:normal;white-space:nowrap;-webkit-text-stroke:0;">4.3</div>
<div style="left:102.00px;top:145.70px;width:40px;text-align:right;line-height:10px;font-size:7.3px;color:#222;font-weight:normal;white-space:nowrap;-webkit-text-stroke:0;">2.4</div>
<div style="left:140.40px;top:145.70px;width:40px;text-align:right;line-height:10px;font-size:7.3px;color:#222;font-weight:normal;white-space:nowrap;-webkit-text-stroke:0;">5</div>
<div style="left:23.00px;top:156.70px;line-height:10px;font-size:7.3px;color:#222;font-weight:normal;white-space:nowrap;-webkit-text-stroke:0;">Category 2</div>
<div style="left:62.60px;top:156.70px;width:40px;text-align:right;line-height:10px;font-size:7.3px;color:#222;font-weight:normal;white-space:nowrap;-webkit-text-stroke:0;">2.5</div>
<div style="left:102.00px;top:156.70px;width:40px;text-align:right;line-height:10px;font-size:7.3px;color:#222;font-weight:normal;white-space:nowrap;-webkit-text-stroke:0;">4.4</div>
<div style="left:140.40px;top:156.70px;width:40px;text-align:right;line-height:10px;font-size:7.3px;color:#222;font-weight:normal;white-space:nowrap;-webkit-text-stroke:0;">2</div>
<div style="left:23.00px;top:167.70px;line-height:10px;font-size:7.3px;color:#222;font-weight:normal;white-space:nowrap;-webkit-text-stroke:0;">Category 3</div>
<div style="left:62.60px;top:167.70px;width:40px;text-align:right;line-height:10px;font-size:7.3px;color:#222;font-weight:normal;white-space:nowrap;-webkit-text-stroke:0;">3.5</div>
<div style="left:102.00px;top:167.70px;width:40px;text-align:right;line-height:10px;font-size:7.3px;color:#222;font-weight:normal;white-space:nowrap;-webkit-text-stroke:0;">9</div>
<div style="left:140.40px;top:167.70px;width:40px;text-align:right;line-height:10px;font-size:7.3px;color:#222;font-weight:normal;white-space:nowrap;-webkit-text-stroke:0;">8</div>
<div style="left:23.00px;top:178.70px;line-height:10px;font-size:7.3px;color:#222;font-weight:normal;white-space:nowrap;-webkit-text-stroke:0;">Category 4</div>
<div style="left:62.60px;top:178.70px;width:40px;text-align:right;line-height:10px;font-size:7.3px;color:#222;font-weight:normal;white-space:nowrap;-webkit-text-stroke:0;">4.5</div>
<div style="left:102.00px;top:178.70px;width:40px;text-align:right;line-height:10px;font-size:7.3px;color:#222;font-weight:normal;white-space:nowrap;-webkit-text-stroke:0;">1</div>
<div style="left:140.40px;top:178.70px;width:40px;text-align:right;line-height:10px;font-size:7.3px;color:#222;font-weight:normal;white-space:nowrap;-webkit-text-stroke:0;">3</div>
<div style="left:21.30px;top:143.00px;width:44.60px;height:12.00px;border:1.6px solid #222;"></div>
<div style="left:64.40px;top:153.50px;width:2.20px;height:2.20px;background:#222;"></div>
<div style="left:380.20px;top:122.50px;width:8.80px;height:296.00px;background:#f0f0f0;"></div>
<div style="left:383.80px;top:131.00px;width:2.00px;height:258.50px;background:#a0a0a0;border-radius:1px;"></div>
<div style="left:6.50px;top:418.50px;width:382.50px;height:10.00px;background:#f0f0f0;border-top:1px solid #c8c8c8;"></div>
<svg style="left:8.50px;top:421.70px;" width="34" height="6" viewBox="0 0 34 6"><path d="M0.6 0.5 V5.5" stroke="#333" stroke-width="0.9"/><path d="M4 0.6 L1.4 3 L4 5.4 Z" fill="#333"/><path d="M12.4 0.8 L10.2 3 L12.4 5.2 Z" fill="#333"/><path d="M18.6 0.8 L20.8 3 L18.6 5.2 Z" fill="#333"/><path d="M27.8 0.6 L30.4 3 L27.8 5.4 Z" fill="#333"/><path d="M31.2 0.5 V5.5" stroke="#333" stroke-width="0.9"/></svg>
<div style="left:44.00px;top:420.30px;width:185.00px;height:8.40px;background:#ececec;border:1px solid #bdbdbd;border-left:none;border-radius:0 2px 2px 0;"></div>
<svg style="left:41.60px;top:420.30px;" width="32" height="8.4" viewBox="0 0 32 8.4"><path d="M0 0 L3.1 8.2 H26.9 L31.6 0 Z" fill="#f7f7f7"/><path d="M0 0 L3.1 8.2 H26.9 L31.6 0" fill="none" stroke="#8a8a8a" stroke-width="0.7"/></svg>
<div style="left:47.80px;top:419.80px;line-height:10px;font-size:6.4px;color:#222;font-weight:normal;white-space:nowrap;">Sheet1</div>
<div style="left:238.60px;top:424.40px;width:105.60px;height:1.40px;background:#9a9a9a;border-radius:1px;"></div>
<div style="left:0.80px;top:428.50px;width:394.20px;height:6.10px;background:#d4e3f3;border-left:1px solid #8c96a0;border-right:2px solid #8a8e94;"></div>
<div style="left:5.50px;top:427.90px;width:383.50px;height:0.80px;background:#c4c4c4;"></div>
<div style="left:0.80px;top:433.60px;width:394.20px;height:1.30px;background:#8e8e8e;"></div>
<div style="left:444.70px;top:103.70px;width:398.30px;height:331.30px;background:#ececec;border-bottom:1px solid #a0a0a0;"></div>
<div style="left:460.30px;top:113.00px;width:373.00px;height:311.16px;background:#fff;"></div>
<div style="left:447.00px;top:104.30px;width:386.30px;height:8.70px;background:#efefef;"></div>
<div style="left:444.70px;top:104.30px;width:2.30px;height:330.70px;background:#e4e4e4;"></div>
<div style="left:446.60px;top:104.30px;width:1.00px;height:319.86px;background:#c8c8c8;"></div>
<div style="left:483.00px;top:104.30px;width:141.80px;height:8.70px;background:#b4d8f6;"></div>
<div style="left:451.65px;top:104.55px;width:40px;text-align:center;line-height:10px;font-size:6px;color:#333;font-weight:normal;white-space:nowrap;-webkit-text-stroke:0;">B</div>
<div style="left:533.90px;top:104.55px;width:40px;text-align:center;line-height:10px;font-size:6px;color:#333;font-weight:normal;white-space:nowrap;-webkit-text-stroke:0;">C</div>
<div style="left:632.80px;top:104.55px;width:40px;text-align:center;line-height:10px;font-size:6px;color:#333;font-weight:normal;white-space:nowrap;-webkit-text-stroke:0;">D</div>
<div style="left:680.65px;top:104.55px;width:40px;text-align:center;line-height:10px;font-size:6px;color:#333;font-weight:normal;white-space:nowrap;-webkit-text-stroke:0;">E</div>
<div style="left:725.00px;top:104.55px;width:40px;text-align:center;line-height:10px;font-size:6px;color:#333;font-weight:normal;white-space:nowrap;-webkit-text-stroke:0;">F</div>
<div style="left:769.60px;top:104.55px;width:40px;text-align:center;line-height:10px;font-size:6px;color:#333;font-weight:normal;white-space:nowrap;-webkit-text-stroke:0;">G</div>
<div style="left:811.50px;top:104.55px;width:40px;text-align:center;line-height:10px;font-size:6px;color:#333;font-weight:normal;white-space:nowrap;-webkit-text-stroke:0;">H</div>
<div style="left:447.00px;top:113.00px;width:13.30px;height:311.16px;background:#efefef;"></div>
<div style="left:447.00px;top:199.91px;width:13.30px;height:9.34px;background:#b4d8f6;"></div>
<div style="left:483.00px;top:190.56px;width:350.30px;height:28.03px;background:#f0f0f0;"></div>
<div style="left:483.00px;top:227.94px;width:350.30px;height:37.38px;background:#f0f0f0;"></div>
<div style="left:483.00px;top:293.35px;width:197.80px;height:9.34px;background:#f0f0f0;"></div>
<div style="left:483.00px;top:312.04px;width:286.50px;height:18.69px;background:#d9d9d9;"></div>
<div style="left:483.00px;top:330.72px;width:286.50px;height:93.44px;background:#f0f0f0;"></div>
<div style="left:624.30px;top:312.04px;width:1.00px;height:112.13px;background:#fff;opacity:0.7;"></div>
<div style="left:680.30px;top:312.04px;width:1.00px;height:112.13px;background:#fff;opacity:0.7;"></div>
<div style="left:720.00px;top:312.04px;width:1.00px;height:112.13px;background:#fff;opacity:0.7;"></div>
<div style="left:483.00px;top:121.50px;width:350.30px;height:1.00px;background:#fff;opacity:0.7;"></div>
<div style="left:483.00px;top:134.00px;width:350.30px;height:1.00px;background:#fff;opacity:0.7;"></div>
<div style="left:483.00px;top:143.34px;width:350.30px;height:1.00px;background:#fff;opacity:0.7;"></div>
<div style="left:483.00px;top:152.69px;width:350.30px;height:1.00px;background:#fff;opacity:0.7;"></div>
<div style="left:483.00px;top:162.03px;width:350.30px;height:1.00px;background:#fff;opacity:0.7;"></div>
<div style="left:483.00px;top:171.38px;width:350.30px;height:1.00px;background:#fff;opacity:0.7;"></div>
<div style="left:483.00px;top:180.72px;width:350.30px;height:1.00px;background:#fff;opacity:0.7;"></div>
<div style="left:483.00px;top:190.06px;width:350.30px;height:1.00px;background:#fff;opacity:0.7;"></div>
<div style="left:483.00px;top:199.41px;width:350.30px;height:1.00px;background:#fff;opacity:0.7;"></div>
<div style="left:483.00px;top:208.75px;width:350.30px;height:1.00px;background:#fff;opacity:0.7;"></div>
<div style="left:483.00px;top:218.10px;width:350.30px;height:1.00px;background:#fff;opacity:0.7;"></div>
<div style="left:483.00px;top:227.44px;width:350.30px;height:1.00px;background:#fff;opacity:0.7;"></div>
<div style="left:483.00px;top:236.78px;width:350.30px;height:1.00px;background:#fff;opacity:0.7;"></div>
<div style="left:483.00px;top:246.13px;width:350.30px;height:1.00px;background:#fff;opacity:0.7;"></div>
<div style="left:483.00px;top:255.47px;width:350.30px;height:1.00px;background:#fff;opacity:0.7;"></div>
<div style="left:483.00px;top:264.82px;width:350.30px;height:1.00px;background:#fff;opacity:0.7;"></div>
<div style="left:483.00px;top:274.16px;width:350.30px;height:1.00px;background:#fff;opacity:0.7;"></div>
<div style="left:483.00px;top:283.50px;width:350.30px;height:1.00px;background:#fff;opacity:0.7;"></div>
<div style="left:483.00px;top:292.85px;width:350.30px;height:1.00px;background:#fff;opacity:0.7;"></div>
<div style="left:483.00px;top:302.19px;width:350.30px;height:1.00px;background:#fff;opacity:0.7;"></div>
<div style="left:483.00px;top:311.54px;width:350.30px;height:1.00px;background:#fff;opacity:0.7;"></div>
<div style="left:483.00px;top:320.88px;width:350.30px;height:1.00px;background:#fff;opacity:0.7;"></div>
<div style="left:483.00px;top:330.22px;width:350.30px;height:1.00px;background:#fff;opacity:0.7;"></div>
<div style="left:483.00px;top:339.57px;width:350.30px;height:1.00px;background:#fff;opacity:0.7;"></div>
<div style="left:483.00px;top:348.91px;width:350.30px;height:1.00px;background:#fff;opacity:0.7;"></div>
<div style="left:483.00px;top:358.26px;width:350.30px;height:1.00px;background:#fff;opacity:0.7;"></div>
<div style="left:483.00px;top:367.60px;width:350.30px;height:1.00px;background:#fff;opacity:0.7;"></div>
<div style="left:483.00px;top:376.94px;width:350.30px;height:1.00px;background:#fff;opacity:0.7;"></div>
<div style="left:483.00px;top:386.29px;width:350.30px;height:1.00px;background:#fff;opacity:0.7;"></div>
<div style="left:483.00px;top:395.63px;width:350.30px;height:1.00px;background:#fff;opacity:0.7;"></div>
<div style="left:483.00px;top:404.98px;width:350.30px;height:1.00px;background:#fff;opacity:0.7;"></div>
<div style="left:483.00px;top:414.32px;width:350.30px;height:1.00px;background:#fff;opacity:0.7;"></div>
<div style="left:483.00px;top:423.66px;width:350.30px;height:1.00px;background:#fff;opacity:0.7;"></div>
<div style="left:483.00px;top:122.00px;width:350.30px;height:12.50px;background:#565656;"></div>
<div style="left:483.00px;top:172.28px;width:350.30px;height:8.34px;background:#ffd200;"></div>
<div style="left:483.00px;top:275.06px;width:350.30px;height:8.04px;background:#ffd200;"></div>
<div style="left:625.30px;top:312.04px;width:94.70px;height:8.84px;background:#d9d9d9;"></div>
<div style="left:459.80px;top:104.30px;width:1.00px;height:8.70px;background:#c8c8c8;"></div>
<div style="left:482.50px;top:104.30px;width:1.00px;height:8.70px;background:#c8c8c8;"></div>
<div style="left:624.30px;top:104.30px;width:1.00px;height:8.70px;background:#c8c8c8;"></div>
<div style="left:680.30px;top:104.30px;width:1.00px;height:8.70px;background:#c8c8c8;"></div>
<div style="left:720.00px;top:104.30px;width:1.00px;height:8.70px;background:#c8c8c8;"></div>
<div style="left:769.00px;top:104.30px;width:1.00px;height:8.70px;background:#c8c8c8;"></div>
<div style="left:809.20px;top:104.30px;width:1.00px;height:8.70px;background:#c8c8c8;"></div>
<div style="left:832.80px;top:104.30px;width:1.00px;height:8.70px;background:#c8c8c8;"></div>
<div style="left:447.00px;top:121.50px;width:13.30px;height:1.00px;background:#c8c8c8;"></div>
<div style="left:447.00px;top:143.34px;width:13.30px;height:1.00px;background:#c8c8c8;"></div>
<div style="left:447.00px;top:152.69px;width:13.30px;height:1.00px;background:#c8c8c8;"></div>
<div style="left:447.00px;top:162.03px;width:13.30px;height:1.00px;background:#c8c8c8;"></div>
<div style="left:447.00px;top:171.38px;width:13.30px;height:1.00px;background:#c8c8c8;"></div>
<div style="left:447.00px;top:180.72px;width:13.30px;height:1.00px;background:#c8c8c8;"></div>
<div style="left:447.00px;top:190.06px;width:13.30px;height:1.00px;background:#c8c8c8;"></div>
<div style="left:447.00px;top:199.41px;width:13.30px;height:1.00px;background:#c8c8c8;"></div>
<div style="left:447.00px;top:208.75px;width:13.30px;height:1.00px;background:#c8c8c8;"></div>
<div style="left:447.00px;top:218.10px;width:13.30px;height:1.00px;background:#c8c8c8;"></div>
<div style="left:447.00px;top:227.44px;width:13.30px;height:1.00px;background:#c8c8c8;"></div>
<div style="left:447.00px;top:236.78px;width:13.30px;height:1.00px;background:#c8c8c8;"></div>
<div style="left:447.00px;top:246.13px;width:13.30px;height:1.00px;background:#c8c8c8;"></div>
<div style="left:447.00px;top:255.47px;width:13.30px;height:1.00px;background:#c8c8c8;"></div>
<div style="left:447.00px;top:264.82px;width:13.30px;height:1.00px;background:#c8c8c8;"></div>
<div style="left:447.00px;top:274.16px;width:13.30px;height:1.00px;background:#c8c8c8;"></div>
<div style="left:447.00px;top:283.50px;width:13.30px;height:1.00px;background:#c8c8c8;"></div>
<div style="left:447.00px;top:292.85px;width:13.30px;height:1.00px;background:#c8c8c8;"></div>
<div style="left:447.00px;top:302.19px;width:13.30px;height:1.00px;background:#c8c8c8;"></div>
<div style="left:447.00px;top:311.54px;width:13.30px;height:1.00px;background:#c8c8c8;"></div>
<div style="left:447.00px;top:320.88px;width:13.30px;height:1.00px;background:#c8c8c8;"></div>
<div style="left:447.00px;top:330.22px;width:13.30px;height:1.00px;background:#c8c8c8;"></div>
<div style="left:447.00px;top:339.57px;width:13.30px;height:1.00px;background:#c8c8c8;"></div>
<div style="left:447.00px;top:348.91px;width:13.30px;height:1.00px;background:#c8c8c8;"></div>
<div style="left:447.00px;top:358.26px;width:13.30px;height:1.00px;background:#c8c8c8;"></div>
<div style="left:447.00px;top:367.60px;width:13.30px;height:1.00px;background:#c8c8c8;"></div>
<div style="left:447.00px;top:376.94px;width:13.30px;height:1.00px;background:#c8c8c8;"></div>
<div style="left:447.00px;top:386.29px;width:13.30px;height:1.00px;background:#c8c8c8;"></div>
<div style="left:447.00px;top:395.63px;width:13.30px;height:1.00px;background:#c8c8c8;"></div>
<div style="left:447.00px;top:404.98px;width:13.30px;height:1.00px;background:#c8c8c8;"></div>
<div style="left:447.00px;top:414.32px;width:13.30px;height:1.00px;background:#c8c8c8;"></div>
<div style="left:447.00px;top:423.66px;width:13.30px;height:1.00px;background:#c8c8c8;"></div>
<div style="left:459.80px;top:104.30px;width:1.00px;height:319.86px;background:#bcbcbc;"></div>
<div style="left:447.00px;top:112.50px;width:386.30px;height:1.00px;background:#bcbcbc;"></div>
<div style="left:446.50px;top:132.70px;width:386.80px;height:1.80px;background:#4a4a4a;"></div>
<div style="left:443.70px;top:113.50px;width:20px;text-align:center;line-height:10px;font-size:6.6px;color:#333;font-weight:normal;white-space:nowrap;">1</div>
<div style="left:443.70px;top:125.10px;width:20px;text-align:center;line-height:10px;font-size:6.6px;color:#333;font-weight:normal;white-space:nowrap;">2</div>
<div style="left:443.70px;top:134.67px;width:20px;text-align:center;line-height:10px;font-size:6.6px;color:#333;font-weight:normal;white-space:nowrap;">3</div>
<div style="left:443.70px;top:144.02px;width:20px;text-align:center;line-height:10px;font-size:6.6px;color:#333;font-weight:normal;white-space:nowrap;">4</div>
<div style="left:443.70px;top:153.36px;width:20px;text-align:center;line-height:10px;font-size:6.6px;color:#333;font-weight:normal;white-space:nowrap;">5</div>
<div style="left:443.70px;top:162.70px;width:20px;text-align:center;line-height:10px;font-size:6.6px;color:#333;font-weight:normal;white-space:nowrap;">6</div>
<div style="left:443.70px;top:172.05px;width:20px;text-align:center;line-height:10px;font-size:6.6px;color:#333;font-weight:normal;white-space:nowrap;">7</div>
<div style="left:443.70px;top:181.39px;width:20px;text-align:center;line-height:10px;font-size:6.6px;color:#333;font-weight:normal;white-space:nowrap;">8</div>
<div style="left:443.70px;top:190.74px;width:20px;text-align:center;line-height:10px;font-size:6.6px;color:#333;font-weight:normal;white-space:nowrap;">9</div>
<div style="left:443.70px;top:200.08px;width:20px;text-align:center;line-height:10px;font-size:6.6px;color:#333;font-weight:normal;white-space:nowrap;">10</div>
<div style="left:443.70px;top:209.42px;width:20px;text-align:center;line-height:10px;font-size:6.6px;color:#333;font-weight:normal;white-space:nowrap;">11</div>
<div style="left:443.70px;top:218.77px;width:20px;text-align:center;line-height:10px;font-size:6.6px;color:#333;font-weight:normal;white-space:nowrap;">14</div>
<div style="left:443.70px;top:228.11px;width:20px;text-align:center;line-height:10px;font-size:6.6px;color:#333;font-weight:normal;white-space:nowrap;">15</div>
<div style="left:443.70px;top:237.46px;width:20px;text-align:center;line-height:10px;font-size:6.6px;color:#333;font-weight:normal;white-space:nowrap;">16</div>
<div style="left:443.70px;top:246.80px;width:20px;text-align:center;line-height:10px;font-size:6.6px;color:#333;font-weight:normal;white-space:nowrap;">17</div>
<div style="left:443.70px;top:256.14px;width:20px;text-align:center;line-height:10px;font-size:6.6px;color:#333;font-weight:normal;white-space:nowrap;">18</div>
<div style="left:443.70px;top:265.49px;width:20px;text-align:center;line-height:10px;font-size:6.6px;color:#333;font-weight:normal;white-space:nowrap;">19</div>
<div style="left:443.70px;top:274.83px;width:20px;text-align:center;line-height:10px;font-size:6.6px;color:#333;font-weight:normal;white-space:nowrap;">20</div>
<div style="left:443.70px;top:284.18px;width:20px;text-align:center;line-height:10px;font-size:6.6px;color:#333;font-weight:normal;white-space:nowrap;">21</div>
<div style="left:443.70px;top:293.52px;width:20px;text-align:center;line-height:10px;font-size:6.6px;color:#333;font-weight:normal;white-space:nowrap;">22</div>
<div style="left:443.70px;top:302.86px;width:20px;text-align:center;line-height:10px;font-size:6.6px;color:#333;font-weight:normal;white-space:nowrap;">24</div>
<div style="left:443.70px;top:312.21px;width:20px;text-align:center;line-height:10px;font-size:6.6px;color:#333;font-weight:normal;white-space:nowrap;">25</div>
<div style="left:443.70px;top:321.55px;width:20px;text-align:center;line-height:10px;font-size:6.6px;color:#333;font-weight:normal;white-space:nowrap;">26</div>
<div style="left:443.70px;top:330.90px;width:20px;text-align:center;line-height:10px;font-size:6.6px;color:#333;font-weight:normal;white-space:nowrap;">27</div>
<div style="left:443.70px;top:340.24px;width:20px;text-align:center;line-height:10px;font-size:6.6px;color:#333;font-weight:normal;white-space:nowrap;">28</div>
<div style="left:443.70px;top:349.58px;width:20px;text-align:center;line-height:10px;font-size:6.6px;color:#333;font-weight:normal;white-space:nowrap;">29</div>
<div style="left:443.70px;top:358.93px;width:20px;text-align:center;line-height:10px;font-size:6.6px;color:#333;font-weight:normal;white-space:nowrap;">30</div>
<div style="left:443.70px;top:368.27px;width:20px;text-align:center;line-height:10px;font-size:6.6px;color:#333;font-weight:normal;white-space:nowrap;">31</div>
<div style="left:443.70px;top:377.62px;width:20px;text-align:center;line-height:10px;font-size:6.6px;color:#333;font-weight:normal;white-space:nowrap;">32</div>
<div style="left:443.70px;top:386.96px;width:20px;text-align:center;line-height:10px;font-size:6.6px;color:#333;font-weight:normal;white-space:nowrap;">33</div>
<div style="left:443.70px;top:396.30px;width:20px;text-align:center;line-height:10px;font-size:6.6px;color:#333;font-weight:normal;white-space:nowrap;">34</div>
<div style="left:443.70px;top:405.65px;width:20px;text-align:center;line-height:10px;font-size:6.6px;color:#333;font-weight:normal;white-space:nowrap;">35</div>
<div style="left:443.70px;top:414.99px;width:20px;text-align:center;line-height:10px;font-size:6.6px;color:#333;font-weight:normal;white-space:nowrap;">77</div>
<div style="left:484.80px;top:113.90px;line-height:10px;font-size:6.35px;color:#b8b8b8;font-weight:normal;white-space:nowrap;letter-spacing:0.05px;-webkit-text-stroke:0.05px currentColor;">Feasibility pro - Version 1.0</div>
<div style="left:687.80px;top:113.80px;width:120px;text-align:right;line-height:10px;font-size:5.9px;color:#b8b8b8;font-weight:normal;white-space:nowrap;">Licensed to: XXXXXX</div>
<div style="left:484.80px;top:124.05px;line-height:10px;font-size:8.2px;color:#e6e6e6;font-weight:normal;white-space:nowrap;letter-spacing:-0.25px;">MAIN INPUT</div>
<div style="left:484.50px;top:134.97px;line-height:10px;font-size:6.35px;color:#222;font-weight:normal;white-space:nowrap;letter-spacing:0.05px;-webkit-text-stroke:0.05px currentColor;">Project Number</div>
<div style="left:484.50px;top:144.32px;line-height:10px;font-size:6.35px;color:#222;font-weight:normal;white-space:nowrap;letter-spacing:0.05px;-webkit-text-stroke:0.05px currentColor;">Project Name</div>
<div style="left:484.50px;top:153.66px;line-height:10px;font-size:6.35px;color:#222;font-weight:normal;white-space:nowrap;letter-spacing:0.05px;-webkit-text-stroke:0.05px currentColor;">Account Code</div>
<div style="left:682.30px;top:134.97px;line-height:10px;font-size:6.35px;color:#4040f0;font-weight:normal;white-space:nowrap;letter-spacing:0.05px;-webkit-text-stroke:0.05px currentColor;">D-25050</div>
<div style="left:682.30px;top:144.32px;line-height:10px;font-size:6.35px;color:#4040f0;font-weight:normal;white-space:nowrap;letter-spacing:0.05px;-webkit-text-stroke:0.05px currentColor;">New Development</div>
<div style="left:682.30px;top:153.66px;line-height:10px;font-size:6.35px;color:#4040f0;font-weight:normal;white-space:nowrap;letter-spacing:0.05px;-webkit-text-stroke:0.05px currentColor;">C-0550-5050</div>
<div style="left:484.50px;top:172.35px;line-height:10px;font-size:6.1px;color:#111;font-weight:bold;white-space:nowrap;letter-spacing:-0.12px;">BASIC INPUT</div>
<div style="left:484.50px;top:191.04px;line-height:10px;font-size:6.35px;color:#222;font-weight:normal;white-space:nowrap;letter-spacing:0.05px;-webkit-text-stroke:0.05px currentColor;">Feasibility Title:</div>
<div style="left:484.50px;top:200.38px;line-height:10px;font-size:6.35px;color:#222;font-weight:normal;white-space:nowrap;letter-spacing:0.05px;-webkit-text-stroke:0.05px currentColor;">Description of Option:</div>
<div style="left:484.50px;top:209.72px;line-height:10px;font-size:6.35px;color:#222;font-weight:normal;white-space:nowrap;letter-spacing:0.05px;-webkit-text-stroke:0.05px currentColor;">Date of First Period:</div>
<div style="left:626.30px;top:191.04px;line-height:10px;font-size:6.35px;color:#4040f0;font-weight:normal;white-space:nowrap;letter-spacing:0.05px;-webkit-text-stroke:0.05px currentColor;">Sector D Land</div>
<div style="left:626.30px;top:200.38px;line-height:10px;font-size:6.35px;color:#4040f0;font-weight:normal;white-space:nowrap;letter-spacing:0.05px;-webkit-text-stroke:0.05px currentColor;">Land</div>
<div style="left:626.30px;top:209.72px;line-height:10px;font-size:6.35px;color:#4040f0;font-weight:normal;white-space:nowrap;letter-spacing:0.05px;-webkit-text-stroke:0.05px currentColor;">Jan-23</div>
<div style="left:484.50px;top:228.41px;line-height:10px;font-size:6.35px;color:#222;font-weight:normal;white-space:nowrap;letter-spacing:0.05px;-webkit-text-stroke:0.05px currentColor;">Site Area:</div>
<div style="left:484.50px;top:237.76px;line-height:10px;font-size:6.35px;color:#222;font-weight:normal;white-space:nowrap;letter-spacing:0.05px;-webkit-text-stroke:0.05px currentColor;">GFA</div>
<div style="left:484.50px;top:247.10px;line-height:10px;font-size:6.35px;color:#222;font-weight:normal;white-space:nowrap;letter-spacing:0.05px;-webkit-text-stroke:0.05px currentColor;">Net Room Area</div>
<div style="left:484.50px;top:256.44px;line-height:10px;font-size:6.35px;color:#222;font-weight:normal;white-space:nowrap;letter-spacing:0.05px;-webkit-text-stroke:0.05px currentColor;">BUA</div>
<div style="left:626.30px;top:228.41px;line-height:10px;font-size:6.35px;color:#4040f0;font-weight:normal;white-space:nowrap;letter-spacing:0.05px;-webkit-text-stroke:0.05px currentColor;">151,000</div>
<div style="left:626.30px;top:237.76px;line-height:10px;font-size:6.35px;color:#222;font-weight:normal;white-space:nowrap;letter-spacing:0.05px;-webkit-text-stroke:0.05px currentColor;">0</div>
<div style="left:626.30px;top:247.10px;line-height:10px;font-size:6.35px;color:#222;font-weight:normal;white-space:nowrap;letter-spacing:0.05px;-webkit-text-stroke:0.05px currentColor;">0</div>
<div style="left:626.30px;top:256.44px;line-height:10px;font-size:6.35px;color:#222;font-weight:normal;white-space:nowrap;letter-spacing:0.05px;-webkit-text-stroke:0.05px currentColor;">0</div>
<div style="left:682.30px;top:228.41px;line-height:10px;font-size:6.35px;color:#222;font-weight:normal;white-space:nowrap;letter-spacing:0.05px;-webkit-text-stroke:0.05px currentColor;">SqM</div>
<div style="left:682.30px;top:237.76px;line-height:10px;font-size:6.35px;color:#222;font-weight:normal;white-space:nowrap;letter-spacing:0.05px;-webkit-text-stroke:0.05px currentColor;">SqM</div>
<div style="left:682.30px;top:247.10px;line-height:10px;font-size:6.35px;color:#222;font-weight:normal;white-space:nowrap;letter-spacing:0.05px;-webkit-text-stroke:0.05px currentColor;">SqM</div>
<div style="left:682.30px;top:256.44px;line-height:10px;font-size:6.35px;color:#222;font-weight:normal;white-space:nowrap;letter-spacing:0.05px;-webkit-text-stroke:0.05px currentColor;">SqM</div>
<div style="left:431.65px;top:275.13px;width:80px;text-align:center;line-height:10px;font-size:6.35px;color:#4040f0;font-weight:normal;white-space:nowrap;letter-spacing:0.05px;-webkit-text-stroke:0.05px currentColor;">1000</div>
<div style="left:484.50px;top:275.13px;line-height:10px;font-size:6.1px;color:#111;font-weight:bold;white-space:nowrap;letter-spacing:-0.12px;">LAND PURCHASE &amp; ACQUISITION COSTS</div>
<div style="left:431.65px;top:293.82px;width:80px;text-align:center;line-height:10px;font-size:6.35px;color:#4040f0;font-weight:normal;white-space:nowrap;letter-spacing:0.05px;-webkit-text-stroke:0.05px currentColor;">1001</div>
<div style="left:484.50px;top:293.82px;line-height:10px;font-size:6.35px;color:#222;font-weight:normal;white-space:nowrap;letter-spacing:0.05px;-webkit-text-stroke:0.05px currentColor;">Land Purchase Price</div>
<div style="left:641.70px;top:293.32px;width:20px;text-align:center;line-height:10px;font-size:6.35px;color:#4040f0;font-weight:normal;white-space:nowrap;">0</div>
<div style="left:482.80px;top:199.61px;width:142.20px;height:9.94px;border:1.4px solid #2e2e2e;"></div>
<div style="left:623.80px;top:208.05px;width:2.20px;height:2.20px;background:#222;"></div>
<div style="left:460.30px;top:274.66px;width:23.00px;height:9.84px;border:1px solid #c0c0c0;background:transparent;"></div>
<div style="left:460.30px;top:293.35px;width:23.00px;height:9.84px;border:1px solid #c0c0c0;background:transparent;"></div>
<div style="left:460.30px;top:312.04px;width:23.00px;height:18.69px;border:1px solid #c0c0c0;"></div>
<div style="left:456.70px;top:316.88px;width:30px;text-align:center;line-height:10px;font-size:6.5px;color:#333;font-weight:normal;white-space:nowrap;">CODE</div>
<div style="left:484.50px;top:316.88px;line-height:10px;font-size:6.1px;color:#222;font-weight:bold;white-space:nowrap;letter-spacing:-0.1px;">LAND PAYMENT</div>
<div style="left:460.30px;top:330.72px;width:23.00px;height:9.84px;border:1px solid #c0c0c0;"></div>
<div style="left:460.30px;top:340.07px;width:23.00px;height:9.84px;border:1px solid #c0c0c0;"></div>
<div style="left:460.30px;top:349.41px;width:23.00px;height:9.84px;border:1px solid #c0c0c0;"></div>
<div style="left:460.30px;top:358.76px;width:23.00px;height:9.84px;border:1px solid #c0c0c0;"></div>
<div style="left:460.30px;top:368.10px;width:23.00px;height:9.84px;border:1px solid #c0c0c0;"></div>
<div style="left:460.30px;top:377.44px;width:23.00px;height:9.84px;border:1px solid #c0c0c0;"></div>
<div style="left:460.30px;top:386.79px;width:23.00px;height:9.84px;border:1px solid #c0c0c0;"></div>
<div style="left:460.30px;top:396.13px;width:23.00px;height:9.84px;border:1px solid #c0c0c0;"></div>
<div style="left:460.30px;top:405.48px;width:23.00px;height:9.84px;border:1px solid #c0c0c0;"></div>
<div style="left:460.30px;top:414.82px;width:23.00px;height:9.84px;border:1px solid #c0c0c0;"></div>
<div style="left:622.60px;top:312.01px;width:100px;text-align:center;line-height:10px;font-size:6.0px;color:#222;font-weight:bold;white-space:nowrap;">% of Land Purchase Price</div>
<div style="left:714.50px;top:312.01px;width:60px;text-align:center;line-height:10px;font-size:6.0px;color:#222;font-weight:bold;white-space:nowrap;">AND/OR</div>
<div style="left:622.80px;top:321.35px;width:60px;text-align:center;line-height:10px;font-size:6.0px;color:#222;font-weight:bold;white-space:nowrap;">% paid</div>
<div style="left:670.60px;top:321.35px;width:60px;text-align:center;line-height:10px;font-size:6.0px;color:#222;font-weight:bold;white-space:nowrap;">Amount</div>
<div style="left:714.50px;top:321.35px;width:60px;text-align:center;line-height:10px;font-size:6.0px;color:#222;font-weight:bold;white-space:nowrap;">Lump Amount</div>
<div style="left:624.30px;top:312.04px;width:1.00px;height:18.69px;background:#fff;"></div>
<div style="left:720.00px;top:312.04px;width:1.00px;height:18.69px;background:#fff;"></div>
<div style="left:680.30px;top:321.38px;width:1.00px;height:9.34px;background:#fff;"></div>
<div style="left:624.80px;top:320.88px;width:145.00px;height:1.00px;background:#fff;"></div>
<div style="left:431.65px;top:331.20px;width:80px;text-align:center;line-height:10px;font-size:6.35px;color:#4040f0;font-weight:normal;white-space:nowrap;letter-spacing:0.05px;-webkit-text-stroke:0.05px currentColor;">1002</div>
<div style="left:484.50px;top:331.20px;line-height:10px;font-size:6.35px;color:#222;font-weight:normal;white-space:nowrap;letter-spacing:0.05px;-webkit-text-stroke:0.05px currentColor;">Payment 1</div>
<div style="left:612.80px;top:331.20px;width:80px;text-align:center;line-height:10px;font-size:6.35px;color:#4040f0;font-weight:normal;white-space:nowrap;letter-spacing:0.05px;-webkit-text-stroke:0.05px currentColor;">0%</div>
<div style="left:660.65px;top:331.20px;width:80px;text-align:center;line-height:10px;font-size:6.35px;color:#222;font-weight:normal;white-space:nowrap;letter-spacing:0.05px;-webkit-text-stroke:0.05px currentColor;">0</div>
<div style="left:703.70px;top:331.20px;width:80px;text-align:center;line-height:10px;font-size:6.35px;color:#4040f0;font-weight:normal;white-space:nowrap;letter-spacing:0.05px;-webkit-text-stroke:0.05px currentColor;">0</div>
<div style="left:431.65px;top:340.54px;width:80px;text-align:center;line-height:10px;font-size:6.35px;color:#4040f0;font-weight:normal;white-space:nowrap;letter-spacing:0.05px;-webkit-text-stroke:0.05px currentColor;">1003</div>
<div style="left:484.50px;top:340.54px;line-height:10px;font-size:6.35px;color:#222;font-weight:normal;white-space:nowrap;letter-spacing:0.05px;-webkit-text-stroke:0.05px currentColor;">Payment 2</div>
<div style="left:612.80px;top:340.54px;width:80px;text-align:center;line-height:10px;font-size:6.35px;color:#4040f0;font-weight:normal;white-space:nowrap;letter-spacing:0.05px;-webkit-text-stroke:0.05px currentColor;">0%</div>
<div style="left:660.65px;top:340.54px;width:80px;text-align:center;line-height:10px;font-size:6.35px;color:#222;font-weight:normal;white-space:nowrap;letter-spacing:0.05px;-webkit-text-stroke:0.05px currentColor;">0</div>
<div style="left:703.70px;top:340.54px;width:80px;text-align:center;line-height:10px;font-size:6.35px;color:#4040f0;font-weight:normal;white-space:nowrap;letter-spacing:0.05px;-webkit-text-stroke:0.05px currentColor;">0</div>
<div style="left:431.65px;top:349.88px;width:80px;text-align:center;line-height:10px;font-size:6.35px;color:#4040f0;font-weight:normal;white-space:nowrap;letter-spacing:0.05px;-webkit-text-stroke:0.05px currentColor;">1004</div>
<div style="left:484.50px;top:349.88px;line-height:10px;font-size:6.35px;color:#222;font-weight:normal;white-space:nowrap;letter-spacing:0.05px;-webkit-text-stroke:0.05px currentColor;">Payment 3</div>
<div style="left:612.80px;top:349.88px;width:80px;text-align:center;line-height:10px;font-size:6.35px;color:#4040f0;font-weight:normal;white-space:nowrap;letter-spacing:0.05px;-webkit-text-stroke:0.05px currentColor;">0%</div>
<div style="left:660.65px;top:349.88px;width:80px;text-align:center;line-height:10px;font-size:6.35px;color:#222;font-weight:normal;white-space:nowrap;letter-spacing:0.05px;-webkit-text-stroke:0.05px currentColor;">0</div>
<div style="left:703.70px;top:349.88px;width:80px;text-align:center;line-height:10px;font-size:6.35px;color:#4040f0;font-weight:normal;white-space:nowrap;letter-spacing:0.05px;-webkit-text-stroke:0.05px currentColor;">0</div>
<div style="left:431.65px;top:359.23px;width:80px;text-align:center;line-height:10px;font-size:6.35px;color:#4040f0;font-weight:normal;white-space:nowrap;letter-spacing:0.05px;-webkit-text-stroke:0.05px currentColor;">1005</div>
<div style="left:484.50px;top:359.23px;line-height:10px;font-size:6.35px;color:#222;font-weight:normal;white-space:nowrap;letter-spacing:0.05px;-webkit-text-stroke:0.05px currentColor;">Payment 4</div>
<div style="left:612.80px;top:359.23px;width:80px;text-align:center;line-height:10px;font-size:6.35px;color:#4040f0;font-weight:normal;white-space:nowrap;letter-spacing:0.05px;-webkit-text-stroke:0.05px currentColor;">0%</div>
<div style="left:660.65px;top:359.23px;width:80px;text-align:center;line-height:10px;font-size:6.35px;color:#222;font-weight:normal;white-space:nowrap;letter-spacing:0.05px;-webkit-text-stroke:0.05px currentColor;">0</div>
<div style="left:703.70px;top:359.23px;width:80px;text-align:center;line-height:10px;font-size:6.35px;color:#4040f0;font-weight:normal;white-space:nowrap;letter-spacing:0.05px;-webkit-text-stroke:0.05px currentColor;">0</div>
<div style="left:431.65px;top:368.57px;width:80px;text-align:center;line-height:10px;font-size:6.35px;color:#4040f0;font-weight:normal;white-space:nowrap;letter-spacing:0.05px;-webkit-text-stroke:0.05px currentColor;">1006</div>
<div style="left:484.50px;top:368.57px;line-height:10px;font-size:6.35px;color:#222;font-weight:normal;white-space:nowrap;letter-spacing:0.05px;-webkit-text-stroke:0.05px currentColor;">Payment 5</div>
<div style="left:612.80px;top:368.57px;width:80px;text-align:center;line-height:10px;font-size:6.35px;color:#4040f0;font-weight:normal;white-space:nowrap;letter-spacing:0.05px;-webkit-text-stroke:0.05px currentColor;">0%</div>
<div style="left:660.65px;top:368.57px;width:80px;text-align:center;line-height:10px;font-size:6.35px;color:#222;font-weight:normal;white-space:nowrap;letter-spacing:0.05px;-webkit-text-stroke:0.05px currentColor;">0</div>
<div style="left:703.70px;top:368.57px;width:80px;text-align:center;line-height:10px;font-size:6.35px;color:#4040f0;font-weight:normal;white-space:nowrap;letter-spacing:0.05px;-webkit-text-stroke:0.05px currentColor;">0</div>
<div style="left:431.65px;top:377.92px;width:80px;text-align:center;line-height:10px;font-size:6.35px;color:#4040f0;font-weight:normal;white-space:nowrap;letter-spacing:0.05px;-webkit-text-stroke:0.05px currentColor;">1007</div>
<div style="left:484.50px;top:377.92px;line-height:10px;font-size:6.35px;color:#222;font-weight:normal;white-space:nowrap;letter-spacing:0.05px;-webkit-text-stroke:0.05px currentColor;">Payment 6</div>
<div style="left:612.80px;top:377.92px;width:80px;text-align:center;line-height:10px;font-size:6.35px;color:#4040f0;font-weight:normal;white-space:nowrap;letter-spacing:0.05px;-webkit-text-stroke:0.05px currentColor;">0%</div>
<div style="left:660.65px;top:377.92px;width:80px;text-align:center;line-height:10px;font-size:6.35px;color:#222;font-weight:normal;white-space:nowrap;letter-spacing:0.05px;-webkit-text-stroke:0.05px currentColor;">0</div>
<div style="left:703.70px;top:377.92px;width:80px;text-align:center;line-height:10px;font-size:6.35px;color:#4040f0;font-weight:normal;white-space:nowrap;letter-spacing:0.05px;-webkit-text-stroke:0.05px currentColor;">0</div>
<div style="left:431.65px;top:387.26px;width:80px;text-align:center;line-height:10px;font-size:6.35px;color:#4040f0;font-weight:normal;white-space:nowrap;letter-spacing:0.05px;-webkit-text-stroke:0.05px currentColor;">1008</div>
<div style="left:484.50px;top:387.26px;line-height:10px;font-size:6.35px;color:#222;font-weight:normal;white-space:nowrap;letter-spacing:0.05px;-webkit-text-stroke:0.05px currentColor;">Payment 7</div>
<div style="left:612.80px;top:387.26px;width:80px;text-align:center;line-height:10px;font-size:6.35px;color:#4040f0;font-weight:normal;white-space:nowrap;letter-spacing:0.05px;-webkit-text-stroke:0.05px currentColor;">0%</div>
<div style="left:660.65px;top:387.26px;width:80px;text-align:center;line-height:10px;font-size:6.35px;color:#222;font-weight:normal;white-space:nowrap;letter-spacing:0.05px;-webkit-text-stroke:0.05px currentColor;">0</div>
<div style="left:703.70px;top:387.26px;width:80px;text-align:center;line-height:10px;font-size:6.35px;color:#4040f0;font-weight:normal;white-space:nowrap;letter-spacing:0.05px;-webkit-text-stroke:0.05px currentColor;">0</div>
<div style="left:431.65px;top:396.60px;width:80px;text-align:center;line-height:10px;font-size:6.35px;color:#4040f0;font-weight:normal;white-space:nowrap;letter-spacing:0.05px;-webkit-text-stroke:0.05px currentColor;">1009</div>
<div style="left:484.50px;top:396.60px;line-height:10px;font-size:6.35px;color:#222;font-weight:normal;white-space:nowrap;letter-spacing:0.05px;-webkit-text-stroke:0.05px currentColor;">Payment 8</div>
<div style="left:612.80px;top:396.60px;width:80px;text-align:center;line-height:10px;font-size:6.35px;color:#4040f0;font-weight:normal;white-space:nowrap;letter-spacing:0.05px;-webkit-text-stroke:0.05px currentColor;">0%</div>
<div style="left:660.65px;top:396.60px;width:80px;text-align:center;line-height:10px;font-size:6.35px;color:#222;font-weight:normal;white-space:nowrap;letter-spacing:0.05px;-webkit-text-stroke:0.05px currentColor;">0</div>
<div style="left:703.70px;top:396.60px;width:80px;text-align:center;line-height:10px;font-size:6.35px;color:#4040f0;font-weight:normal;white-space:nowrap;letter-spacing:0.05px;-webkit-text-stroke:0.05px currentColor;">0</div>
<div style="left:431.65px;top:405.95px;width:80px;text-align:center;line-height:10px;font-size:6.35px;color:#4040f0;font-weight:normal;white-space:nowrap;letter-spacing:0.05px;-webkit-text-stroke:0.05px currentColor;">1010</div>
<div style="left:484.50px;top:405.95px;line-height:10px;font-size:6.35px;color:#222;font-weight:normal;white-space:nowrap;letter-spacing:0.05px;-webkit-text-stroke:0.05px currentColor;">Payment 9</div>
<div style="left:612.80px;top:405.95px;width:80px;text-align:center;line-height:10px;font-size:6.35px;color:#4040f0;font-weight:normal;white-space:nowrap;letter-spacing:0.05px;-webkit-text-stroke:0.05px currentColor;">0%</div>
<div style="left:660.65px;top:405.95px;width:80px;text-align:center;line-height:10px;font-size:6.35px;color:#222;font-weight:normal;white-space:nowrap;letter-spacing:0.05px;-webkit-text-stroke:0.05px currentColor;">0</div>
<div style="left:703.70px;top:405.95px;width:80px;text-align:center;line-height:10px;font-size:6.35px;color:#4040f0;font-weight:normal;white-space:nowrap;letter-spacing:0.05px;-webkit-text-stroke:0.05px currentColor;">0</div>
<div style="left:431.65px;top:415.29px;width:80px;text-align:center;line-height:10px;font-size:6.35px;color:#4040f0;font-weight:normal;white-space:nowrap;letter-spacing:0.05px;-webkit-text-stroke:0.05px currentColor;">1102</div>
<div style="left:484.50px;top:415.29px;line-height:10px;font-size:6.35px;color:#222;font-weight:normal;white-space:nowrap;letter-spacing:0.05px;-webkit-text-stroke:0.05px currentColor;">Closing (Balance)</div>
<div style="left:612.80px;top:415.29px;width:80px;text-align:center;line-height:10px;font-size:6.35px;color:#222;font-weight:normal;white-space:nowrap;letter-spacing:0.05px;-webkit-text-stroke:0.05px currentColor;">100%</div>
<div style="left:660.65px;top:415.29px;width:80px;text-align:center;line-height:10px;font-size:6.35px;color:#222;font-weight:normal;white-space:nowrap;letter-spacing:0.05px;-webkit-text-stroke:0.05px currentColor;">0</div>
<div style="left:703.70px;top:415.29px;width:80px;text-align:center;line-height:10px;font-size:6.35px;color:#4040f0;font-weight:normal;white-space:nowrap;letter-spacing:0.05px;-webkit-text-stroke:0.05px currentColor;">0</div>
<div style="left:833.30px;top:104.30px;width:9.70px;height:319.86px;background:#f0f0f0;"></div>
<div style="left:841.80px;top:104.30px;width:1.20px;height:330.70px;background:#c8c8c8;"></div>
<div style="left:837.00px;top:113.50px;width:2.00px;height:37.00px;background:#a0a0a0;border-radius:1px;"></div>
<div style="left:447.00px;top:424.16px;width:386.30px;height:0.84px;background:#fff;"></div>
<div style="left:447.00px;top:424.16px;width:13.30px;height:0.84px;background:#efefef;"></div>
<div style="left:447.00px;top:425.00px;width:396.00px;height:10.00px;background:#f0f0f0;border-top:1px solid #c8c8c8;"></div>
<svg style="left:448.80px;top:427.20px;" width="34" height="6" viewBox="0 0 34 6"><path d="M0.6 0.5 V5.5" stroke="#333" stroke-width="0.9"/><path d="M4 0.6 L1.4 3 L4 5.4 Z" fill="#333"/><path d="M12.4 0.8 L10.2 3 L12.4 5.2 Z" fill="#333"/><path d="M18.6 0.8 L20.8 3 L18.6 5.2 Z" fill="#333"/><path d="M27.8 0.6 L30.4 3 L27.8 5.4 Z" fill="#333"/><path d="M31.2 0.5 V5.5" stroke="#333" stroke-width="0.9"/></svg>
<svg style="left:726.80px;top:425.00px;" width="33.90000000000009" height="9.199999999999989" viewBox="0 0 33.90000000000009 9.199999999999989"><path d="M0 0 L3 9.199999999999989 H30.40000000000009 L33.40000000000009 0 Z" fill="#d3d3d3"/><path d="M30.40000000000009 9.199999999999989 L33.40000000000009 0" stroke="#8a8a8a" stroke-width="0.6"/></svg>
<svg style="left:691.00px;top:425.00px;" width="39.299999999999955" height="9.199999999999989" viewBox="0 0 39.299999999999955 9.199999999999989"><path d="M0 0 L3 9.199999999999989 H35.799999999999955 L38.799999999999955 0 Z" fill="#d3d3d3"/><path d="M35.799999999999955 9.199999999999989 L38.799999999999955 0" stroke="#8a8a8a" stroke-width="0.6"/></svg>
<svg style="left:617.30px;top:425.00px;" width="77.20000000000005" height="9.199999999999989" viewBox="0 0 77.20000000000005 9.199999999999989"><path d="M0 0 L3 9.199999999999989 H73.70000000000005 L76.70000000000005 0 Z" fill="#d3d3d3"/><path d="M73.70000000000005 9.199999999999989 L76.70000000000005 0" stroke="#8a8a8a" stroke-width="0.6"/></svg>
<svg style="left:587.60px;top:425.00px;" width="33.19999999999993" height="9.199999999999989" viewBox="0 0 33.19999999999993 9.199999999999989"><path d="M0 0 L3 9.199999999999989 H29.699999999999932 L32.69999999999993 0 Z" fill="#d3d3d3"/><path d="M29.699999999999932 9.199999999999989 L32.69999999999993 0" stroke="#8a8a8a" stroke-width="0.6"/></svg>
<svg style="left:565.10px;top:425.00px;" width="26.0" height="9.199999999999989" viewBox="0 0 26.0 9.199999999999989"><path d="M0 0 L3 9.199999999999989 H22.5 L25.5 0 Z" fill="#d3d3d3"/><path d="M22.5 9.199999999999989 L25.5 0" stroke="#8a8a8a" stroke-width="0.6"/></svg>
<svg style="left:505.50px;top:425.00px;" width="63.10000000000002" height="9.199999999999989" viewBox="0 0 63.10000000000002 9.199999999999989"><path d="M0 0 L3 9.199999999999989 H59.60000000000002 L62.60000000000002 0 Z" fill="#d3d3d3"/><path d="M59.60000000000002 9.199999999999989 L62.60000000000002 0" stroke="#8a8a8a" stroke-width="0.6"/></svg>
<svg style="left:482.80px;top:425.00px;" width="26.19999999999999" height="9.199999999999989" viewBox="0 0 26.19999999999999 9.199999999999989"><path d="M0 0 L3 9.199999999999989 H22.69999999999999 L25.69999999999999 0 Z" fill="#ffffff"/><path d="M22.69999999999999 9.199999999999989 L25.69999999999999 0" stroke="#8a8a8a" stroke-width="0.6"/><path d="M0 0 L3 9.199999999999989" stroke="#8a8a8a" stroke-width="0.6"/></svg>
<div style="left:488.30px;top:425.20px;line-height:10px;font-size:6.65px;color:#222;font-weight:normal;white-space:nowrap;">Input</div>
<div style="left:509.90px;top:425.20px;line-height:10px;font-size:6.65px;color:#222;font-weight:normal;white-space:nowrap;">Development data</div>
<div style="left:570.00px;top:425.20px;line-height:10px;font-size:6.65px;color:#222;font-weight:normal;white-space:nowrap;">Rental</div>
<div style="left:593.70px;top:425.20px;line-height:10px;font-size:6.65px;color:#222;font-weight:normal;white-space:nowrap;">S-Curve</div>
<div style="left:622.00px;top:425.20px;line-height:10px;font-size:6.65px;color:#222;font-weight:normal;white-space:nowrap;">Sales &amp; Cash Collection</div>
<div style="left:696.70px;top:425.20px;line-height:10px;font-size:6.65px;color:#222;font-weight:normal;white-space:nowrap;">Cash Flow</div>
<div style="left:732.40px;top:425.20px;line-height:10px;font-size:6.65px;color:#222;font-weight:normal;white-space:nowrap;">Financial</div>
<div style="left:447.00px;top:434.20px;width:396.00px;height:0.80px;background:#b0b0b0;"></div>
<div style="left:769.60px;top:430.00px;width:27.80px;height:1.30px;background:#7a7a7a;"></div>
<div style="left:0.00px;top:434.90px;width:843.00px;height:12.10px;background:#f0f0f0;"></div>
<div style="left:393.00px;top:433.60px;width:450.00px;height:1.30px;background:#9a9a9a;"></div>
<div style="left:4.60px;top:437.10px;line-height:10px;font-size:6.9px;color:#333;font-weight:normal;white-space:nowrap;">Option : Option 1</div>
<div style="left:760.00px;top:441.20px;width:4.50px;height:1.00px;background:#333;"></div>
<div style="left:767.40px;top:441.20px;width:24.00px;height:1.00px;background:#4a78c0;"></div>
<div style="left:792.00px;top:441.20px;width:39.00px;height:0.80px;background:#c8c8c8;"></div>
<div style="left:790.80px;top:438.00px;width:2.90px;height:6.50px;background:#555;"></div>
<div style="left:798.50px;top:440.70px;width:1.50px;height:1.50px;background:#aaa;"></div>
<svg style="left:833.90px;top:439.20px;" width="4.5" height="4.5" viewBox="0 0 4.5 4.5"><path d="M2.25 0 V4.5 M0 2.25 H4.5" stroke="#333" stroke-width="1"/></svg>
<div style="left:0.00px;top:447.00px;width:843.00px;height:27.00px;background:linear-gradient(90deg,#e1e1e1 0%,#e9e9e8 35%,#e6e6e5 55%,#dfdfdf 75%,#e0e0e0 100%);border-top:1px solid #d8d8d8;"></div>
<svg style="left:269.00px;top:455.00px;" width="13" height="12" viewBox="0 0 13 12"><rect x="0" y="0" width="6" height="5.6" fill="#2b9de8"/><rect x="6.8" y="0" width="6" height="5.6" fill="#39a9f0"/><rect x="0" y="6.4" width="6" height="5.6" fill="#1f8ee0"/><rect x="6.8" y="6.4" width="6" height="5.6" fill="#2b9de8"/></svg>
<div style="left:290.00px;top:453.00px;width:118.00px;height:16.00px;background:#f7f7f7;border:1px solid #dcdcdc;border-radius:8px;"></div>
<svg style="left:295.50px;top:457.00px;" width="8" height="8" viewBox="0 0 8 8"><circle cx="3.2" cy="3.2" r="2.5" stroke="#222" stroke-width="1" fill="none"/><path d="M5 5 L7.5 7.5" stroke="#222" stroke-width="1.1"/></svg>
<div style="left:309.50px;top:456.00px;line-height:10px;font-size:7px;color:#555;font-weight:normal;white-space:nowrap;">Search</div>
<svg style="left:382.00px;top:455.50px;" width="22" height="12" viewBox="0 0 22 12"><ellipse cx="11" cy="6.5" rx="10" ry="4" fill="#a8b4d8" opacity="0.6"/><path d="M3 9 Q10 2 20 3 Q12 6 3 9Z" fill="#3a4058"/></svg>
<svg style="left:416.00px;top:456.00px;" width="12" height="11" viewBox="0 0 12 11"><rect x="3" y="0" width="9" height="8" fill="#d8d8d8"/><path d="M0 3 H2 V9 H9 V11 H0 Z" fill="#202020"/><rect x="2" y="3" width="7" height="6" fill="#444"/></svg>
<svg style="left:440.50px;top:455.50px;" width="13.5" height="12" viewBox="0 0 13.5 12"><path d="M0 1 H5 L6 2.5 H13.5 V11.5 H0 Z" fill="#f2b82a"/><rect x="0" y="3.5" width="13.5" height="8" fill="#ffd04a"/><rect x="2" y="7.5" width="9.5" height="2" fill="#1f6fd0"/></svg>
<svg style="left:465.00px;top:455.50px;" width="13" height="13" viewBox="0 0 13 13"><circle cx="6.5" cy="6.5" r="6.3" fill="#dd4437"/><path d="M6.5 6.5 L1 3.3 A6.3 6.3 0 0 0 3.5 12 Z" fill="#1e9e52"/><path d="M6.5 6.5 L3.5 12 A6.3 6.3 0 0 0 12.8 6.5 Z" fill="#fcc934"/><circle cx="6.5" cy="6.5" r="2.9" fill="#fff"/><circle cx="6.5" cy="6.5" r="2.2" fill="#3a80e8"/></svg>
<svg style="left:489.00px;top:455.50px;" width="13" height="12.5" viewBox="0 0 13 12.5"><rect x="3" y="0" width="10" height="12.5" rx="1" fill="#2a5db8"/><rect x="3" y="0" width="10" height="4" fill="#41a5ee"/><rect x="3" y="4" width="10" height="4" fill="#2b7cd3"/><rect x="0" y="3" width="7.5" height="7" rx="0.8" fill="#185abd"/><text x="3.75" y="8.8" font-size="5.5" font-weight="bold" font-family="Liberation Sans" fill="#fff" text-anchor="middle">W</text></svg>
<svg style="left:512.50px;top:455.00px;" width="14.5" height="13.5" viewBox="0 0 14.5 13.5"><path d="M10.5 0 L14.5 2 V11.5 L10.5 13.5 L3.5 7.2 L1.2 9 L0 8.3 V5.2 L1.2 4.5 L3.5 6.3 Z" fill="#8a5ad0"/><path d="M10.5 3.8 V9.7 L6.7 6.75 Z" fill="#c8a8f0"/><path d="M1.5 5.5 L3 6.75 L1.5 8 Z" fill="#c8a8f0"/></svg>
<svg style="left:537.50px;top:457.60px;" width="13" height="7" viewBox="0 0 13 7"><path d="M0 7 L4.6 1.6 L6.6 3.6 L4.4 7 Z" fill="#1f78e8"/><path d="M4.6 1.6 L5.9 0.2 L13 7 H10.5 Z" fill="#90dcf4"/></svg>
<div style="left:557.80px;top:450.60px;width:20.40px;height:20.60px;background:#eeeeee;border-radius:3px;"></div>
<svg style="left:562.30px;top:454.80px;" width="12" height="13" viewBox="0 0 12 13"><g fill="#d9562a"><rect x="0.2" y="0.4" width="1.3" height="1.3"/><rect x="2.2" y="0.4" width="1.3" height="1.3"/><rect x="4.2" y="0.4" width="1.3" height="1.3"/><rect x="0.2" y="2.4" width="1.3" height="1.3"/><rect x="0.2" y="4.4" width="1.3" height="1.3"/></g><path d="M5.6 1.2 V9.5 M1.2 6 H9" stroke="#8a8f96" stroke-width="1.2"/><circle cx="5.6" cy="11.2" r="1.5" fill="none" stroke="#3a92e0" stroke-width="1"/><circle cx="10.3" cy="6" r="1.5" fill="none" stroke="#3a92e0" stroke-width="1"/></svg>
<div style="left:469.70px;top:470.00px;width:3.60px;height:1.20px;background:#888;border-radius:1px;"></div>
<div style="left:493.70px;top:470.00px;width:3.60px;height:1.20px;background:#888;border-radius:1px;"></div>
<div style="left:517.70px;top:470.00px;width:3.60px;height:1.20px;background:#888;border-radius:1px;"></div>
<div style="left:541.70px;top:470.00px;width:3.60px;height:1.20px;background:#888;border-radius:1px;"></div>
<div style="left:563.50px;top:470.00px;width:9.00px;height:1.50px;background:#1a6ad0;border-radius:1px;"></div>
<svg style="left:700.00px;top:459.00px;" width="7.5" height="4.5" viewBox="0 0 7.5 4.5"><path d="M0.5 4 L3.75 0.7 L7 4" stroke="#222" stroke-width="1" fill="none"/></svg>
<div style="left:710.00px;top:451.60px;width:30px;text-align:center;line-height:10px;font-size:6.2px;color:#222;font-weight:normal;white-space:nowrap;">ENG</div>
<div style="left:710.00px;top:460.30px;width:30px;text-align:center;line-height:10px;font-size:6.2px;color:#222;font-weight:normal;white-space:nowrap;">IN</div>
<svg style="left:741.80px;top:457.60px;" width="7.4" height="6.4" viewBox="0 0 7.4 6.4"><path d="M0.4 2.2 Q3.7 -0.8 7 2.2" stroke="#333" stroke-width="0.8" fill="none"/><path d="M1.5 3.4 Q3.7 1.5 5.9 3.4" stroke="#333" stroke-width="0.8" fill="none"/><path d="M2.6 4.6 Q3.7 3.6 4.8 4.6 L3.7 5.9 Z" fill="#333"/></svg>
<svg style="left:754.00px;top:457.50px;" width="9.5" height="7.5" viewBox="0 0 9.5 7.5"><path d="M0.5 2.5 H2.5 L5 0.5 V7 L2.5 5 H0.5 Z" fill="none" stroke="#222" stroke-width="0.8"/><path d="M6.3 2 Q7.3 3.75 6.3 5.5 M7.8 1 Q9.2 3.75 7.8 6.5" stroke="#222" stroke-width="0.7" fill="none"/></svg>
<svg style="left:767.00px;top:458.50px;" width="9.5" height="5.5" viewBox="0 0 9.5 5.5"><rect x="0.5" y="0.5" width="7.5" height="4.5" rx="0.8" fill="none" stroke="#222" stroke-width="0.8"/><rect x="1.6" y="1.6" width="4.5" height="2.3" fill="#222"/><rect x="8.3" y="1.8" width="1" height="2" fill="#222"/></svg>
<div style="left:779.30px;top:452.00px;width:40px;text-align:right;line-height:10px;font-size:6.3px;color:#222;font-weight:normal;white-space:nowrap;">3:49 PM</div>
<div style="left:769.30px;top:460.50px;width:50px;text-align:right;line-height:10px;font-size:6.75px;color:#222;font-weight:normal;white-space:nowrap;">10/19/2023</div>
<svg style="left:824.00px;top:457.50px;" width="8" height="8.5" viewBox="0 0 8 8.5"><path d="M4 0.5 C1.8 0.5 1.3 2.5 1.3 4.5 L0.3 6.5 H7.7 L6.7 4.5 C6.7 2.5 6.2 0.5 4 0.5 Z" fill="#1a6ad0"/><circle cx="4" cy="7.5" r="1" fill="#1a6ad0"/></svg>
</body></html>
